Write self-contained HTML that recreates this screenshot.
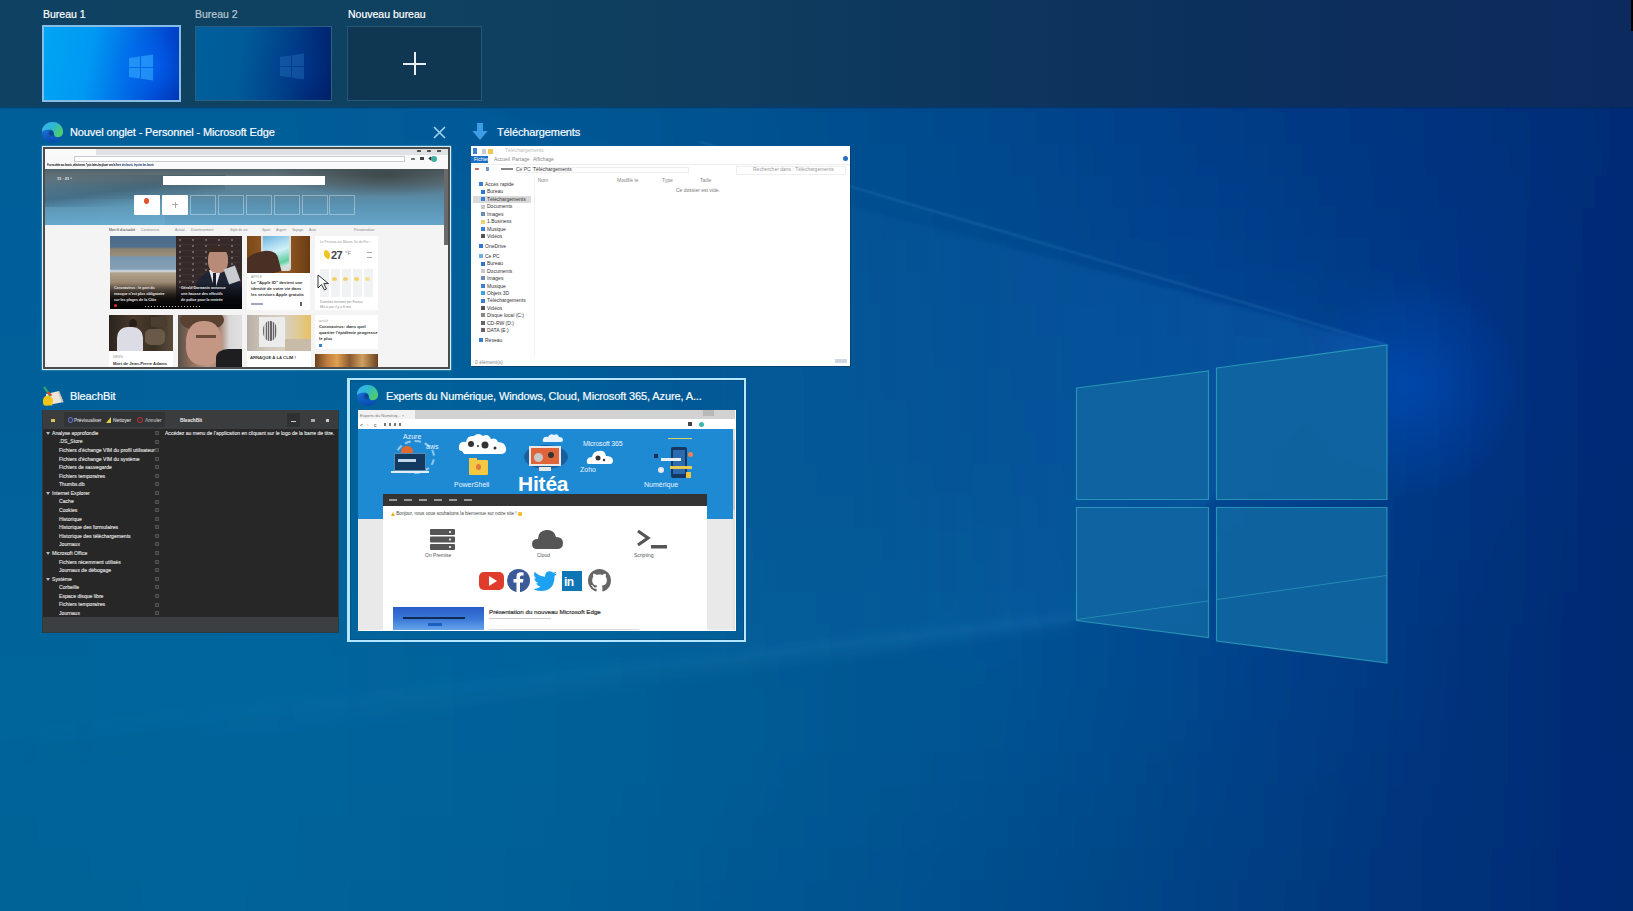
<!DOCTYPE html>
<html><head><meta charset="utf-8">
<style>
*{margin:0;padding:0;box-sizing:border-box}
html,body{width:1633px;height:911px;overflow:hidden;background:#005090;font-family:"Liberation Sans",sans-serif}
.abs{position:absolute}

#wall{position:absolute;left:0;top:0;width:1633px;height:911px}
#band{position:absolute;left:0;top:0;width:1633px;height:106.5px;box-shadow:0 1px 1.5px rgba(0,40,80,.55);background:linear-gradient(90deg,#0f4262 0%,#0f405f 33%,#0e3a5e 50%,#0c305c 74%,#0d2a5e 100%)}
.dlabel{position:absolute;top:8px;font-size:10.5px;-webkit-text-stroke:0.2px currentColor;color:#fff;white-space:nowrap}
.dthumb{position:absolute;top:25px;width:139px;height:77px}
.bbt{position:absolute;font-size:5.1px;line-height:7px;color:#e2e2e2;white-space:nowrap;-webkit-text-stroke:0.15px #ddd}
.ext{position:absolute;font-size:5px;line-height:6.5px;color:#333;white-space:nowrap}
.ttl{position:absolute;font-size:11px;letter-spacing:-0.12px;-webkit-text-stroke:0.2px #eef6fc;color:#fff;white-space:nowrap}
</style></head><body>
<svg id="wall" width="1633" height="911" viewBox="0 0 1633 911">
<!--F--><defs><linearGradient id="r0"><stop offset="0.000" stop-color="#005b97"/><stop offset="0.030" stop-color="#005b97"/><stop offset="0.061" stop-color="#005a97"/><stop offset="0.091" stop-color="#005a97"/><stop offset="0.121" stop-color="#005a96"/><stop offset="0.152" stop-color="#005a96"/><stop offset="0.182" stop-color="#005a96"/><stop offset="0.212" stop-color="#005a96"/><stop offset="0.242" stop-color="#005995"/><stop offset="0.273" stop-color="#005995"/><stop offset="0.303" stop-color="#005894"/><stop offset="0.333" stop-color="#005793"/><stop offset="0.364" stop-color="#005692"/><stop offset="0.394" stop-color="#005491"/><stop offset="0.424" stop-color="#005391"/><stop offset="0.455" stop-color="#005190"/><stop offset="0.485" stop-color="#004f8f"/><stop offset="0.515" stop-color="#004d8e"/><stop offset="0.545" stop-color="#004b8d"/><stop offset="0.576" stop-color="#00498d"/><stop offset="0.606" stop-color="#00478c"/><stop offset="0.636" stop-color="#00448b"/><stop offset="0.667" stop-color="#00428a"/><stop offset="0.697" stop-color="#003f89"/><stop offset="0.727" stop-color="#003d87"/><stop offset="0.758" stop-color="#003a85"/><stop offset="0.788" stop-color="#003883"/><stop offset="0.818" stop-color="#003681"/><stop offset="0.848" stop-color="#00337f"/><stop offset="0.879" stop-color="#00317d"/><stop offset="0.909" stop-color="#002f7a"/><stop offset="0.939" stop-color="#002e77"/><stop offset="0.970" stop-color="#002c74"/><stop offset="1.000" stop-color="#002a71"/></linearGradient><linearGradient id="r1"><stop offset="0.000" stop-color="#005b97"/><stop offset="0.030" stop-color="#005b97"/><stop offset="0.061" stop-color="#005a97"/><stop offset="0.091" stop-color="#005a97"/><stop offset="0.121" stop-color="#005a96"/><stop offset="0.152" stop-color="#005a96"/><stop offset="0.182" stop-color="#005a96"/><stop offset="0.212" stop-color="#005a96"/><stop offset="0.242" stop-color="#005995"/><stop offset="0.273" stop-color="#005995"/><stop offset="0.303" stop-color="#005894"/><stop offset="0.333" stop-color="#005793"/><stop offset="0.364" stop-color="#005692"/><stop offset="0.394" stop-color="#005491"/><stop offset="0.424" stop-color="#005391"/><stop offset="0.455" stop-color="#005190"/><stop offset="0.485" stop-color="#004f8f"/><stop offset="0.515" stop-color="#004d8e"/><stop offset="0.545" stop-color="#004b8d"/><stop offset="0.576" stop-color="#00498d"/><stop offset="0.606" stop-color="#00478c"/><stop offset="0.636" stop-color="#00448b"/><stop offset="0.667" stop-color="#00428a"/><stop offset="0.697" stop-color="#003f89"/><stop offset="0.727" stop-color="#003d87"/><stop offset="0.758" stop-color="#003a85"/><stop offset="0.788" stop-color="#003883"/><stop offset="0.818" stop-color="#003681"/><stop offset="0.848" stop-color="#00337f"/><stop offset="0.879" stop-color="#00317d"/><stop offset="0.909" stop-color="#002f7a"/><stop offset="0.939" stop-color="#002e77"/><stop offset="0.970" stop-color="#002c74"/><stop offset="1.000" stop-color="#002a71"/></linearGradient><linearGradient id="r2"><stop offset="0.000" stop-color="#005b97"/><stop offset="0.030" stop-color="#005b97"/><stop offset="0.061" stop-color="#005a97"/><stop offset="0.091" stop-color="#005a97"/><stop offset="0.121" stop-color="#005a96"/><stop offset="0.152" stop-color="#005a96"/><stop offset="0.182" stop-color="#005a96"/><stop offset="0.212" stop-color="#005a96"/><stop offset="0.242" stop-color="#005995"/><stop offset="0.273" stop-color="#005995"/><stop offset="0.303" stop-color="#005894"/><stop offset="0.333" stop-color="#005793"/><stop offset="0.364" stop-color="#005692"/><stop offset="0.394" stop-color="#005491"/><stop offset="0.424" stop-color="#005391"/><stop offset="0.455" stop-color="#005190"/><stop offset="0.485" stop-color="#004f8f"/><stop offset="0.515" stop-color="#004d8e"/><stop offset="0.545" stop-color="#004b8d"/><stop offset="0.576" stop-color="#00498d"/><stop offset="0.606" stop-color="#00478c"/><stop offset="0.636" stop-color="#00448b"/><stop offset="0.667" stop-color="#00428a"/><stop offset="0.697" stop-color="#003f89"/><stop offset="0.727" stop-color="#003d87"/><stop offset="0.758" stop-color="#003a85"/><stop offset="0.788" stop-color="#003883"/><stop offset="0.818" stop-color="#003681"/><stop offset="0.848" stop-color="#00337f"/><stop offset="0.879" stop-color="#00317d"/><stop offset="0.909" stop-color="#002f7a"/><stop offset="0.939" stop-color="#002e77"/><stop offset="0.970" stop-color="#002c74"/><stop offset="1.000" stop-color="#002a71"/></linearGradient><linearGradient id="r3"><stop offset="0.000" stop-color="#005b97"/><stop offset="0.030" stop-color="#005b97"/><stop offset="0.061" stop-color="#005a97"/><stop offset="0.091" stop-color="#005a97"/><stop offset="0.121" stop-color="#005a96"/><stop offset="0.152" stop-color="#005a96"/><stop offset="0.182" stop-color="#005a96"/><stop offset="0.212" stop-color="#005a96"/><stop offset="0.242" stop-color="#005995"/><stop offset="0.273" stop-color="#005995"/><stop offset="0.303" stop-color="#005894"/><stop offset="0.333" stop-color="#005793"/><stop offset="0.364" stop-color="#005692"/><stop offset="0.394" stop-color="#005491"/><stop offset="0.424" stop-color="#005391"/><stop offset="0.455" stop-color="#005190"/><stop offset="0.485" stop-color="#004f8f"/><stop offset="0.515" stop-color="#004d8e"/><stop offset="0.545" stop-color="#004b8d"/><stop offset="0.576" stop-color="#00498d"/><stop offset="0.606" stop-color="#00478c"/><stop offset="0.636" stop-color="#00448b"/><stop offset="0.667" stop-color="#00428a"/><stop offset="0.697" stop-color="#003f89"/><stop offset="0.727" stop-color="#003d87"/><stop offset="0.758" stop-color="#003a85"/><stop offset="0.788" stop-color="#003883"/><stop offset="0.818" stop-color="#003681"/><stop offset="0.848" stop-color="#00337f"/><stop offset="0.879" stop-color="#00317d"/><stop offset="0.909" stop-color="#002f7a"/><stop offset="0.939" stop-color="#002e77"/><stop offset="0.970" stop-color="#002c74"/><stop offset="1.000" stop-color="#002a71"/></linearGradient><linearGradient id="r4"><stop offset="0.000" stop-color="#005b97"/><stop offset="0.030" stop-color="#005b97"/><stop offset="0.061" stop-color="#005a97"/><stop offset="0.091" stop-color="#005a97"/><stop offset="0.121" stop-color="#005a96"/><stop offset="0.152" stop-color="#005a96"/><stop offset="0.182" stop-color="#005a96"/><stop offset="0.212" stop-color="#005a96"/><stop offset="0.242" stop-color="#005995"/><stop offset="0.273" stop-color="#005995"/><stop offset="0.303" stop-color="#005894"/><stop offset="0.333" stop-color="#005793"/><stop offset="0.364" stop-color="#005692"/><stop offset="0.394" stop-color="#005491"/><stop offset="0.424" stop-color="#005391"/><stop offset="0.455" stop-color="#005190"/><stop offset="0.485" stop-color="#004f8f"/><stop offset="0.515" stop-color="#004d8e"/><stop offset="0.545" stop-color="#004b8d"/><stop offset="0.576" stop-color="#00498d"/><stop offset="0.606" stop-color="#00478c"/><stop offset="0.636" stop-color="#00448b"/><stop offset="0.667" stop-color="#00428a"/><stop offset="0.697" stop-color="#003f89"/><stop offset="0.727" stop-color="#003d87"/><stop offset="0.758" stop-color="#003a85"/><stop offset="0.788" stop-color="#003883"/><stop offset="0.818" stop-color="#003681"/><stop offset="0.848" stop-color="#00337f"/><stop offset="0.879" stop-color="#00317d"/><stop offset="0.909" stop-color="#002f7a"/><stop offset="0.939" stop-color="#002e77"/><stop offset="0.970" stop-color="#002c74"/><stop offset="1.000" stop-color="#002a71"/></linearGradient><linearGradient id="r5"><stop offset="0.000" stop-color="#005b97"/><stop offset="0.030" stop-color="#005b97"/><stop offset="0.061" stop-color="#005a97"/><stop offset="0.091" stop-color="#005a97"/><stop offset="0.121" stop-color="#005a96"/><stop offset="0.152" stop-color="#005a96"/><stop offset="0.182" stop-color="#005a96"/><stop offset="0.212" stop-color="#005a96"/><stop offset="0.242" stop-color="#005995"/><stop offset="0.273" stop-color="#005995"/><stop offset="0.303" stop-color="#005894"/><stop offset="0.333" stop-color="#005793"/><stop offset="0.364" stop-color="#005692"/><stop offset="0.394" stop-color="#005491"/><stop offset="0.424" stop-color="#005391"/><stop offset="0.455" stop-color="#005190"/><stop offset="0.485" stop-color="#004f8f"/><stop offset="0.515" stop-color="#004d8e"/><stop offset="0.545" stop-color="#004b8d"/><stop offset="0.576" stop-color="#00498d"/><stop offset="0.606" stop-color="#00478c"/><stop offset="0.636" stop-color="#00448b"/><stop offset="0.667" stop-color="#00428a"/><stop offset="0.697" stop-color="#003f89"/><stop offset="0.727" stop-color="#003d87"/><stop offset="0.758" stop-color="#003a85"/><stop offset="0.788" stop-color="#003883"/><stop offset="0.818" stop-color="#003681"/><stop offset="0.848" stop-color="#00337f"/><stop offset="0.879" stop-color="#00317d"/><stop offset="0.909" stop-color="#002f7a"/><stop offset="0.939" stop-color="#002e77"/><stop offset="0.970" stop-color="#002c74"/><stop offset="1.000" stop-color="#002a71"/></linearGradient><linearGradient id="r6"><stop offset="0.000" stop-color="#005b97"/><stop offset="0.030" stop-color="#005b97"/><stop offset="0.061" stop-color="#005b97"/><stop offset="0.091" stop-color="#005b97"/><stop offset="0.121" stop-color="#005b97"/><stop offset="0.152" stop-color="#005b96"/><stop offset="0.182" stop-color="#005b96"/><stop offset="0.212" stop-color="#005a96"/><stop offset="0.242" stop-color="#005a95"/><stop offset="0.273" stop-color="#005995"/><stop offset="0.303" stop-color="#005894"/><stop offset="0.333" stop-color="#005793"/><stop offset="0.364" stop-color="#005693"/><stop offset="0.394" stop-color="#005592"/><stop offset="0.424" stop-color="#005391"/><stop offset="0.455" stop-color="#005290"/><stop offset="0.485" stop-color="#00508f"/><stop offset="0.515" stop-color="#004e8f"/><stop offset="0.545" stop-color="#004c8e"/><stop offset="0.576" stop-color="#004a8d"/><stop offset="0.606" stop-color="#00478d"/><stop offset="0.636" stop-color="#00458c"/><stop offset="0.667" stop-color="#00428b"/><stop offset="0.697" stop-color="#00408a"/><stop offset="0.727" stop-color="#003d88"/><stop offset="0.758" stop-color="#003b86"/><stop offset="0.788" stop-color="#003884"/><stop offset="0.818" stop-color="#003682"/><stop offset="0.848" stop-color="#003480"/><stop offset="0.879" stop-color="#00327e"/><stop offset="0.909" stop-color="#00307b"/><stop offset="0.939" stop-color="#002e78"/><stop offset="0.970" stop-color="#002c75"/><stop offset="1.000" stop-color="#002a72"/></linearGradient><linearGradient id="r7"><stop offset="0.000" stop-color="#005b97"/><stop offset="0.030" stop-color="#005b97"/><stop offset="0.061" stop-color="#005b97"/><stop offset="0.091" stop-color="#005b97"/><stop offset="0.121" stop-color="#005b97"/><stop offset="0.152" stop-color="#005b97"/><stop offset="0.182" stop-color="#005b97"/><stop offset="0.212" stop-color="#005b96"/><stop offset="0.242" stop-color="#005b96"/><stop offset="0.273" stop-color="#005a95"/><stop offset="0.303" stop-color="#005995"/><stop offset="0.333" stop-color="#005894"/><stop offset="0.364" stop-color="#005793"/><stop offset="0.394" stop-color="#005592"/><stop offset="0.424" stop-color="#005491"/><stop offset="0.455" stop-color="#005291"/><stop offset="0.485" stop-color="#005190"/><stop offset="0.515" stop-color="#004f8f"/><stop offset="0.545" stop-color="#004d8f"/><stop offset="0.576" stop-color="#004b8e"/><stop offset="0.606" stop-color="#00488e"/><stop offset="0.636" stop-color="#00468d"/><stop offset="0.667" stop-color="#00438c"/><stop offset="0.697" stop-color="#00418b"/><stop offset="0.727" stop-color="#003e89"/><stop offset="0.758" stop-color="#003c87"/><stop offset="0.788" stop-color="#003985"/><stop offset="0.818" stop-color="#003783"/><stop offset="0.848" stop-color="#003481"/><stop offset="0.879" stop-color="#00327f"/><stop offset="0.909" stop-color="#00307c"/><stop offset="0.939" stop-color="#002e79"/><stop offset="0.970" stop-color="#002c75"/><stop offset="1.000" stop-color="#002a72"/></linearGradient><linearGradient id="r8"><stop offset="0.000" stop-color="#005c97"/><stop offset="0.030" stop-color="#005c97"/><stop offset="0.061" stop-color="#005c97"/><stop offset="0.091" stop-color="#005c97"/><stop offset="0.121" stop-color="#005c97"/><stop offset="0.152" stop-color="#005c97"/><stop offset="0.182" stop-color="#005c97"/><stop offset="0.212" stop-color="#005c97"/><stop offset="0.242" stop-color="#005b96"/><stop offset="0.273" stop-color="#005b96"/><stop offset="0.303" stop-color="#005a95"/><stop offset="0.333" stop-color="#005994"/><stop offset="0.364" stop-color="#005793"/><stop offset="0.394" stop-color="#005692"/><stop offset="0.424" stop-color="#005592"/><stop offset="0.455" stop-color="#005391"/><stop offset="0.485" stop-color="#005190"/><stop offset="0.515" stop-color="#004f90"/><stop offset="0.545" stop-color="#004d8f"/><stop offset="0.576" stop-color="#004b8f"/><stop offset="0.606" stop-color="#00498e"/><stop offset="0.636" stop-color="#00478e"/><stop offset="0.667" stop-color="#00448d"/><stop offset="0.697" stop-color="#00418c"/><stop offset="0.727" stop-color="#003f8b"/><stop offset="0.758" stop-color="#003d89"/><stop offset="0.788" stop-color="#003a86"/><stop offset="0.818" stop-color="#003784"/><stop offset="0.848" stop-color="#003582"/><stop offset="0.879" stop-color="#003280"/><stop offset="0.909" stop-color="#00307d"/><stop offset="0.939" stop-color="#002e79"/><stop offset="0.970" stop-color="#002b76"/><stop offset="1.000" stop-color="#002972"/></linearGradient><linearGradient id="r9"><stop offset="0.000" stop-color="#005c98"/><stop offset="0.030" stop-color="#005c98"/><stop offset="0.061" stop-color="#005c97"/><stop offset="0.091" stop-color="#005c97"/><stop offset="0.121" stop-color="#005c97"/><stop offset="0.152" stop-color="#005c97"/><stop offset="0.182" stop-color="#005c97"/><stop offset="0.212" stop-color="#005c97"/><stop offset="0.242" stop-color="#005c97"/><stop offset="0.273" stop-color="#005b96"/><stop offset="0.303" stop-color="#005b95"/><stop offset="0.333" stop-color="#005995"/><stop offset="0.364" stop-color="#005894"/><stop offset="0.394" stop-color="#005793"/><stop offset="0.424" stop-color="#005592"/><stop offset="0.455" stop-color="#005491"/><stop offset="0.485" stop-color="#005291"/><stop offset="0.515" stop-color="#005090"/><stop offset="0.545" stop-color="#004e90"/><stop offset="0.576" stop-color="#004c90"/><stop offset="0.606" stop-color="#004a8f"/><stop offset="0.636" stop-color="#00478f"/><stop offset="0.667" stop-color="#00458e"/><stop offset="0.697" stop-color="#00428d"/><stop offset="0.727" stop-color="#00408c"/><stop offset="0.758" stop-color="#003e8a"/><stop offset="0.788" stop-color="#003b88"/><stop offset="0.818" stop-color="#003886"/><stop offset="0.848" stop-color="#003684"/><stop offset="0.879" stop-color="#003381"/><stop offset="0.909" stop-color="#00307e"/><stop offset="0.939" stop-color="#002d7a"/><stop offset="0.970" stop-color="#002b76"/><stop offset="1.000" stop-color="#002972"/></linearGradient><linearGradient id="r10"><stop offset="0.000" stop-color="#005c98"/><stop offset="0.030" stop-color="#005c98"/><stop offset="0.061" stop-color="#005d98"/><stop offset="0.091" stop-color="#005d98"/><stop offset="0.121" stop-color="#005d98"/><stop offset="0.152" stop-color="#005d98"/><stop offset="0.182" stop-color="#005d97"/><stop offset="0.212" stop-color="#005d97"/><stop offset="0.242" stop-color="#005d97"/><stop offset="0.273" stop-color="#005c96"/><stop offset="0.303" stop-color="#005b96"/><stop offset="0.333" stop-color="#005a95"/><stop offset="0.364" stop-color="#005994"/><stop offset="0.394" stop-color="#005793"/><stop offset="0.424" stop-color="#005692"/><stop offset="0.455" stop-color="#005491"/><stop offset="0.485" stop-color="#005291"/><stop offset="0.515" stop-color="#005191"/><stop offset="0.545" stop-color="#004f90"/><stop offset="0.576" stop-color="#004d90"/><stop offset="0.606" stop-color="#004b90"/><stop offset="0.636" stop-color="#004890"/><stop offset="0.667" stop-color="#00468f"/><stop offset="0.697" stop-color="#00448e"/><stop offset="0.727" stop-color="#00428d"/><stop offset="0.758" stop-color="#003f8b"/><stop offset="0.788" stop-color="#003d89"/><stop offset="0.818" stop-color="#003a87"/><stop offset="0.848" stop-color="#003785"/><stop offset="0.879" stop-color="#003383"/><stop offset="0.909" stop-color="#00307f"/><stop offset="0.939" stop-color="#002d7b"/><stop offset="0.970" stop-color="#002b76"/><stop offset="1.000" stop-color="#002972"/></linearGradient><linearGradient id="r11"><stop offset="0.000" stop-color="#005d98"/><stop offset="0.030" stop-color="#005d98"/><stop offset="0.061" stop-color="#005d98"/><stop offset="0.091" stop-color="#005d98"/><stop offset="0.121" stop-color="#005d98"/><stop offset="0.152" stop-color="#005d98"/><stop offset="0.182" stop-color="#005e98"/><stop offset="0.212" stop-color="#005d98"/><stop offset="0.242" stop-color="#005d97"/><stop offset="0.273" stop-color="#005d97"/><stop offset="0.303" stop-color="#005c96"/><stop offset="0.333" stop-color="#005b95"/><stop offset="0.364" stop-color="#005994"/><stop offset="0.394" stop-color="#005893"/><stop offset="0.424" stop-color="#005692"/><stop offset="0.455" stop-color="#005492"/><stop offset="0.485" stop-color="#005391"/><stop offset="0.515" stop-color="#005191"/><stop offset="0.545" stop-color="#005091"/><stop offset="0.576" stop-color="#004d91"/><stop offset="0.606" stop-color="#004b90"/><stop offset="0.636" stop-color="#004990"/><stop offset="0.667" stop-color="#004790"/><stop offset="0.697" stop-color="#00458f"/><stop offset="0.727" stop-color="#00438e"/><stop offset="0.758" stop-color="#00418d"/><stop offset="0.788" stop-color="#003f8b"/><stop offset="0.818" stop-color="#003c89"/><stop offset="0.848" stop-color="#003887"/><stop offset="0.879" stop-color="#003384"/><stop offset="0.909" stop-color="#003080"/><stop offset="0.939" stop-color="#002d7b"/><stop offset="0.970" stop-color="#002a76"/><stop offset="1.000" stop-color="#002872"/></linearGradient><linearGradient id="r12"><stop offset="0.000" stop-color="#005d98"/><stop offset="0.030" stop-color="#005d98"/><stop offset="0.061" stop-color="#005e98"/><stop offset="0.091" stop-color="#005e98"/><stop offset="0.121" stop-color="#005e98"/><stop offset="0.152" stop-color="#005e98"/><stop offset="0.182" stop-color="#005e98"/><stop offset="0.212" stop-color="#005e98"/><stop offset="0.242" stop-color="#005e97"/><stop offset="0.273" stop-color="#005d97"/><stop offset="0.303" stop-color="#005c96"/><stop offset="0.333" stop-color="#005b95"/><stop offset="0.364" stop-color="#005a94"/><stop offset="0.394" stop-color="#005893"/><stop offset="0.424" stop-color="#005692"/><stop offset="0.455" stop-color="#005592"/><stop offset="0.485" stop-color="#005391"/><stop offset="0.515" stop-color="#005291"/><stop offset="0.545" stop-color="#005091"/><stop offset="0.576" stop-color="#004e91"/><stop offset="0.606" stop-color="#004c91"/><stop offset="0.636" stop-color="#004a91"/><stop offset="0.667" stop-color="#004891"/><stop offset="0.697" stop-color="#004690"/><stop offset="0.727" stop-color="#00448f"/><stop offset="0.758" stop-color="#00438e"/><stop offset="0.788" stop-color="#00418d"/><stop offset="0.818" stop-color="#003d8b"/><stop offset="0.848" stop-color="#003988"/><stop offset="0.879" stop-color="#003485"/><stop offset="0.909" stop-color="#003080"/><stop offset="0.939" stop-color="#002d7b"/><stop offset="0.970" stop-color="#002a76"/><stop offset="1.000" stop-color="#002872"/></linearGradient><linearGradient id="r13"><stop offset="0.000" stop-color="#005e98"/><stop offset="0.030" stop-color="#005e98"/><stop offset="0.061" stop-color="#005e98"/><stop offset="0.091" stop-color="#005e98"/><stop offset="0.121" stop-color="#005e98"/><stop offset="0.152" stop-color="#005f98"/><stop offset="0.182" stop-color="#005f98"/><stop offset="0.212" stop-color="#005e98"/><stop offset="0.242" stop-color="#005e98"/><stop offset="0.273" stop-color="#005e97"/><stop offset="0.303" stop-color="#005d96"/><stop offset="0.333" stop-color="#005b95"/><stop offset="0.364" stop-color="#005a94"/><stop offset="0.394" stop-color="#005893"/><stop offset="0.424" stop-color="#005792"/><stop offset="0.455" stop-color="#005592"/><stop offset="0.485" stop-color="#005391"/><stop offset="0.515" stop-color="#005291"/><stop offset="0.545" stop-color="#005091"/><stop offset="0.576" stop-color="#004e91"/><stop offset="0.606" stop-color="#004c91"/><stop offset="0.636" stop-color="#004b91"/><stop offset="0.667" stop-color="#004991"/><stop offset="0.697" stop-color="#004791"/><stop offset="0.727" stop-color="#004590"/><stop offset="0.758" stop-color="#00448f"/><stop offset="0.788" stop-color="#00428e"/><stop offset="0.818" stop-color="#003e8c"/><stop offset="0.848" stop-color="#003989"/><stop offset="0.879" stop-color="#003485"/><stop offset="0.909" stop-color="#003080"/><stop offset="0.939" stop-color="#002d7b"/><stop offset="0.970" stop-color="#002a76"/><stop offset="1.000" stop-color="#002871"/></linearGradient><linearGradient id="r14"><stop offset="0.000" stop-color="#005e98"/><stop offset="0.030" stop-color="#005e98"/><stop offset="0.061" stop-color="#005f98"/><stop offset="0.091" stop-color="#005f98"/><stop offset="0.121" stop-color="#005f99"/><stop offset="0.152" stop-color="#005f99"/><stop offset="0.182" stop-color="#005f99"/><stop offset="0.212" stop-color="#005f98"/><stop offset="0.242" stop-color="#005f98"/><stop offset="0.273" stop-color="#005e97"/><stop offset="0.303" stop-color="#005d97"/><stop offset="0.333" stop-color="#005c96"/><stop offset="0.364" stop-color="#005a95"/><stop offset="0.394" stop-color="#005994"/><stop offset="0.424" stop-color="#005792"/><stop offset="0.455" stop-color="#005592"/><stop offset="0.485" stop-color="#005491"/><stop offset="0.515" stop-color="#005291"/><stop offset="0.545" stop-color="#005091"/><stop offset="0.576" stop-color="#004f91"/><stop offset="0.606" stop-color="#004d91"/><stop offset="0.636" stop-color="#004b91"/><stop offset="0.667" stop-color="#004991"/><stop offset="0.697" stop-color="#004891"/><stop offset="0.727" stop-color="#004691"/><stop offset="0.758" stop-color="#00448f"/><stop offset="0.788" stop-color="#00428e"/><stop offset="0.818" stop-color="#003e8c"/><stop offset="0.848" stop-color="#003989"/><stop offset="0.879" stop-color="#003485"/><stop offset="0.909" stop-color="#003080"/><stop offset="0.939" stop-color="#002d7a"/><stop offset="0.970" stop-color="#002a75"/><stop offset="1.000" stop-color="#002771"/></linearGradient><linearGradient id="r15"><stop offset="0.000" stop-color="#005f98"/><stop offset="0.030" stop-color="#005f98"/><stop offset="0.061" stop-color="#005f98"/><stop offset="0.091" stop-color="#005f99"/><stop offset="0.121" stop-color="#006099"/><stop offset="0.152" stop-color="#006099"/><stop offset="0.182" stop-color="#006099"/><stop offset="0.212" stop-color="#006099"/><stop offset="0.242" stop-color="#005f98"/><stop offset="0.273" stop-color="#005e98"/><stop offset="0.303" stop-color="#005e97"/><stop offset="0.333" stop-color="#005c96"/><stop offset="0.364" stop-color="#005b95"/><stop offset="0.394" stop-color="#005994"/><stop offset="0.424" stop-color="#005793"/><stop offset="0.455" stop-color="#005692"/><stop offset="0.485" stop-color="#005491"/><stop offset="0.515" stop-color="#005291"/><stop offset="0.545" stop-color="#005190"/><stop offset="0.576" stop-color="#004f91"/><stop offset="0.606" stop-color="#004d91"/><stop offset="0.636" stop-color="#004c92"/><stop offset="0.667" stop-color="#004a92"/><stop offset="0.697" stop-color="#004891"/><stop offset="0.727" stop-color="#004791"/><stop offset="0.758" stop-color="#004490"/><stop offset="0.788" stop-color="#00428e"/><stop offset="0.818" stop-color="#003e8c"/><stop offset="0.848" stop-color="#003989"/><stop offset="0.879" stop-color="#003485"/><stop offset="0.909" stop-color="#00307f"/><stop offset="0.939" stop-color="#002d7a"/><stop offset="0.970" stop-color="#002a74"/><stop offset="1.000" stop-color="#002770"/></linearGradient><linearGradient id="r16"><stop offset="0.000" stop-color="#006098"/><stop offset="0.030" stop-color="#006098"/><stop offset="0.061" stop-color="#006098"/><stop offset="0.091" stop-color="#006099"/><stop offset="0.121" stop-color="#006099"/><stop offset="0.152" stop-color="#006099"/><stop offset="0.182" stop-color="#006099"/><stop offset="0.212" stop-color="#006099"/><stop offset="0.242" stop-color="#006099"/><stop offset="0.273" stop-color="#005f98"/><stop offset="0.303" stop-color="#005e97"/><stop offset="0.333" stop-color="#005d96"/><stop offset="0.364" stop-color="#005b95"/><stop offset="0.394" stop-color="#005a94"/><stop offset="0.424" stop-color="#005893"/><stop offset="0.455" stop-color="#005692"/><stop offset="0.485" stop-color="#005491"/><stop offset="0.515" stop-color="#005291"/><stop offset="0.545" stop-color="#005191"/><stop offset="0.576" stop-color="#004f91"/><stop offset="0.606" stop-color="#004e91"/><stop offset="0.636" stop-color="#004c92"/><stop offset="0.667" stop-color="#004b92"/><stop offset="0.697" stop-color="#004991"/><stop offset="0.727" stop-color="#004791"/><stop offset="0.758" stop-color="#00448f"/><stop offset="0.788" stop-color="#00418d"/><stop offset="0.818" stop-color="#003d8b"/><stop offset="0.848" stop-color="#003988"/><stop offset="0.879" stop-color="#003483"/><stop offset="0.909" stop-color="#00307e"/><stop offset="0.939" stop-color="#002d79"/><stop offset="0.970" stop-color="#002a74"/><stop offset="1.000" stop-color="#002770"/></linearGradient><linearGradient id="r17"><stop offset="0.000" stop-color="#006098"/><stop offset="0.030" stop-color="#006098"/><stop offset="0.061" stop-color="#006099"/><stop offset="0.091" stop-color="#006099"/><stop offset="0.121" stop-color="#006199"/><stop offset="0.152" stop-color="#006199"/><stop offset="0.182" stop-color="#006199"/><stop offset="0.212" stop-color="#006099"/><stop offset="0.242" stop-color="#006099"/><stop offset="0.273" stop-color="#005f98"/><stop offset="0.303" stop-color="#005e97"/><stop offset="0.333" stop-color="#005d96"/><stop offset="0.364" stop-color="#005c95"/><stop offset="0.394" stop-color="#005a94"/><stop offset="0.424" stop-color="#005893"/><stop offset="0.455" stop-color="#005692"/><stop offset="0.485" stop-color="#005491"/><stop offset="0.515" stop-color="#005391"/><stop offset="0.545" stop-color="#005291"/><stop offset="0.576" stop-color="#005091"/><stop offset="0.606" stop-color="#004f92"/><stop offset="0.636" stop-color="#004d92"/><stop offset="0.667" stop-color="#004b92"/><stop offset="0.697" stop-color="#004991"/><stop offset="0.727" stop-color="#004790"/><stop offset="0.758" stop-color="#00448f"/><stop offset="0.788" stop-color="#00418d"/><stop offset="0.818" stop-color="#003d8a"/><stop offset="0.848" stop-color="#003986"/><stop offset="0.879" stop-color="#003482"/><stop offset="0.909" stop-color="#00307d"/><stop offset="0.939" stop-color="#002d78"/><stop offset="0.970" stop-color="#002a73"/><stop offset="1.000" stop-color="#00276f"/></linearGradient><linearGradient id="r18"><stop offset="0.000" stop-color="#006198"/><stop offset="0.030" stop-color="#006199"/><stop offset="0.061" stop-color="#006199"/><stop offset="0.091" stop-color="#006199"/><stop offset="0.121" stop-color="#006199"/><stop offset="0.152" stop-color="#00619a"/><stop offset="0.182" stop-color="#00619a"/><stop offset="0.212" stop-color="#006199"/><stop offset="0.242" stop-color="#006199"/><stop offset="0.273" stop-color="#006098"/><stop offset="0.303" stop-color="#005f98"/><stop offset="0.333" stop-color="#005e97"/><stop offset="0.364" stop-color="#005c95"/><stop offset="0.394" stop-color="#005b94"/><stop offset="0.424" stop-color="#005993"/><stop offset="0.455" stop-color="#005792"/><stop offset="0.485" stop-color="#005591"/><stop offset="0.515" stop-color="#005491"/><stop offset="0.545" stop-color="#005291"/><stop offset="0.576" stop-color="#005192"/><stop offset="0.606" stop-color="#005092"/><stop offset="0.636" stop-color="#004e92"/><stop offset="0.667" stop-color="#004c92"/><stop offset="0.697" stop-color="#004991"/><stop offset="0.727" stop-color="#004790"/><stop offset="0.758" stop-color="#00448e"/><stop offset="0.788" stop-color="#00408c"/><stop offset="0.818" stop-color="#003c89"/><stop offset="0.848" stop-color="#003885"/><stop offset="0.879" stop-color="#003480"/><stop offset="0.909" stop-color="#00307c"/><stop offset="0.939" stop-color="#002d77"/><stop offset="0.970" stop-color="#002a73"/><stop offset="1.000" stop-color="#00276f"/></linearGradient><linearGradient id="r19"><stop offset="0.000" stop-color="#006198"/><stop offset="0.030" stop-color="#006199"/><stop offset="0.061" stop-color="#006199"/><stop offset="0.091" stop-color="#006199"/><stop offset="0.121" stop-color="#00629a"/><stop offset="0.152" stop-color="#00629a"/><stop offset="0.182" stop-color="#00629a"/><stop offset="0.212" stop-color="#00619a"/><stop offset="0.242" stop-color="#006199"/><stop offset="0.273" stop-color="#006099"/><stop offset="0.303" stop-color="#005f98"/><stop offset="0.333" stop-color="#005e97"/><stop offset="0.364" stop-color="#005d96"/><stop offset="0.394" stop-color="#005b95"/><stop offset="0.424" stop-color="#005a93"/><stop offset="0.455" stop-color="#005893"/><stop offset="0.485" stop-color="#005692"/><stop offset="0.515" stop-color="#005592"/><stop offset="0.545" stop-color="#005392"/><stop offset="0.576" stop-color="#005292"/><stop offset="0.606" stop-color="#005193"/><stop offset="0.636" stop-color="#004f93"/><stop offset="0.667" stop-color="#004c92"/><stop offset="0.697" stop-color="#004a91"/><stop offset="0.727" stop-color="#00478f"/><stop offset="0.758" stop-color="#00438d"/><stop offset="0.788" stop-color="#00408b"/><stop offset="0.818" stop-color="#003c87"/><stop offset="0.848" stop-color="#003883"/><stop offset="0.879" stop-color="#00347f"/><stop offset="0.909" stop-color="#00307a"/><stop offset="0.939" stop-color="#002d76"/><stop offset="0.970" stop-color="#002a72"/><stop offset="1.000" stop-color="#00276f"/></linearGradient><linearGradient id="r20"><stop offset="0.000" stop-color="#006299"/><stop offset="0.030" stop-color="#006299"/><stop offset="0.061" stop-color="#006299"/><stop offset="0.091" stop-color="#00629a"/><stop offset="0.121" stop-color="#00629a"/><stop offset="0.152" stop-color="#00629a"/><stop offset="0.182" stop-color="#00629a"/><stop offset="0.212" stop-color="#00629a"/><stop offset="0.242" stop-color="#00619a"/><stop offset="0.273" stop-color="#006199"/><stop offset="0.303" stop-color="#006098"/><stop offset="0.333" stop-color="#005f97"/><stop offset="0.364" stop-color="#005d96"/><stop offset="0.394" stop-color="#005c95"/><stop offset="0.424" stop-color="#005a94"/><stop offset="0.455" stop-color="#005993"/><stop offset="0.485" stop-color="#005792"/><stop offset="0.515" stop-color="#005692"/><stop offset="0.545" stop-color="#005493"/><stop offset="0.576" stop-color="#005393"/><stop offset="0.606" stop-color="#005193"/><stop offset="0.636" stop-color="#004f93"/><stop offset="0.667" stop-color="#004d92"/><stop offset="0.697" stop-color="#004a91"/><stop offset="0.727" stop-color="#00468f"/><stop offset="0.758" stop-color="#00438c"/><stop offset="0.788" stop-color="#003f8a"/><stop offset="0.818" stop-color="#003b86"/><stop offset="0.848" stop-color="#003782"/><stop offset="0.879" stop-color="#00337e"/><stop offset="0.909" stop-color="#003079"/><stop offset="0.939" stop-color="#002d76"/><stop offset="0.970" stop-color="#002a72"/><stop offset="1.000" stop-color="#00276f"/></linearGradient><linearGradient id="r21"><stop offset="0.000" stop-color="#006299"/><stop offset="0.030" stop-color="#006299"/><stop offset="0.061" stop-color="#006299"/><stop offset="0.091" stop-color="#00629a"/><stop offset="0.121" stop-color="#00629a"/><stop offset="0.152" stop-color="#00629a"/><stop offset="0.182" stop-color="#00629a"/><stop offset="0.212" stop-color="#00629a"/><stop offset="0.242" stop-color="#00629a"/><stop offset="0.273" stop-color="#006199"/><stop offset="0.303" stop-color="#006098"/><stop offset="0.333" stop-color="#005f97"/><stop offset="0.364" stop-color="#005e96"/><stop offset="0.394" stop-color="#005c95"/><stop offset="0.424" stop-color="#005b94"/><stop offset="0.455" stop-color="#005993"/><stop offset="0.485" stop-color="#005893"/><stop offset="0.515" stop-color="#005793"/><stop offset="0.545" stop-color="#005593"/><stop offset="0.576" stop-color="#005493"/><stop offset="0.606" stop-color="#005294"/><stop offset="0.636" stop-color="#005093"/><stop offset="0.667" stop-color="#004d92"/><stop offset="0.697" stop-color="#004a90"/><stop offset="0.727" stop-color="#00468e"/><stop offset="0.758" stop-color="#00428c"/><stop offset="0.788" stop-color="#003f89"/><stop offset="0.818" stop-color="#003b85"/><stop offset="0.848" stop-color="#003781"/><stop offset="0.879" stop-color="#00337d"/><stop offset="0.909" stop-color="#003079"/><stop offset="0.939" stop-color="#002c75"/><stop offset="0.970" stop-color="#002a72"/><stop offset="1.000" stop-color="#00276f"/></linearGradient><linearGradient id="r22"><stop offset="0.000" stop-color="#006299"/><stop offset="0.030" stop-color="#006299"/><stop offset="0.061" stop-color="#006299"/><stop offset="0.091" stop-color="#00639a"/><stop offset="0.121" stop-color="#00639a"/><stop offset="0.152" stop-color="#00639a"/><stop offset="0.182" stop-color="#00639b"/><stop offset="0.212" stop-color="#00629a"/><stop offset="0.242" stop-color="#00629a"/><stop offset="0.273" stop-color="#006199"/><stop offset="0.303" stop-color="#006199"/><stop offset="0.333" stop-color="#006098"/><stop offset="0.364" stop-color="#005e97"/><stop offset="0.394" stop-color="#005d95"/><stop offset="0.424" stop-color="#005c95"/><stop offset="0.455" stop-color="#005a94"/><stop offset="0.485" stop-color="#005993"/><stop offset="0.515" stop-color="#005793"/><stop offset="0.545" stop-color="#005693"/><stop offset="0.576" stop-color="#005494"/><stop offset="0.606" stop-color="#005394"/><stop offset="0.636" stop-color="#005093"/><stop offset="0.667" stop-color="#004d91"/><stop offset="0.697" stop-color="#00498f"/><stop offset="0.727" stop-color="#00468d"/><stop offset="0.758" stop-color="#00428b"/><stop offset="0.788" stop-color="#003e88"/><stop offset="0.818" stop-color="#003a84"/><stop offset="0.848" stop-color="#003680"/><stop offset="0.879" stop-color="#00337c"/><stop offset="0.909" stop-color="#002f78"/><stop offset="0.939" stop-color="#002c75"/><stop offset="0.970" stop-color="#002a72"/><stop offset="1.000" stop-color="#00276f"/></linearGradient><linearGradient id="r23"><stop offset="0.000" stop-color="#006399"/><stop offset="0.030" stop-color="#006399"/><stop offset="0.061" stop-color="#006399"/><stop offset="0.091" stop-color="#00639a"/><stop offset="0.121" stop-color="#00639a"/><stop offset="0.152" stop-color="#00639b"/><stop offset="0.182" stop-color="#00639b"/><stop offset="0.212" stop-color="#00639b"/><stop offset="0.242" stop-color="#00629a"/><stop offset="0.273" stop-color="#006299"/><stop offset="0.303" stop-color="#006199"/><stop offset="0.333" stop-color="#006098"/><stop offset="0.364" stop-color="#005f97"/><stop offset="0.394" stop-color="#005d96"/><stop offset="0.424" stop-color="#005c95"/><stop offset="0.455" stop-color="#005b94"/><stop offset="0.485" stop-color="#005994"/><stop offset="0.515" stop-color="#005893"/><stop offset="0.545" stop-color="#005693"/><stop offset="0.576" stop-color="#005593"/><stop offset="0.606" stop-color="#005393"/><stop offset="0.636" stop-color="#005092"/><stop offset="0.667" stop-color="#004d90"/><stop offset="0.697" stop-color="#00498e"/><stop offset="0.727" stop-color="#00458c"/><stop offset="0.758" stop-color="#00418a"/><stop offset="0.788" stop-color="#003d87"/><stop offset="0.818" stop-color="#003a83"/><stop offset="0.848" stop-color="#003680"/><stop offset="0.879" stop-color="#00327c"/><stop offset="0.909" stop-color="#002f78"/><stop offset="0.939" stop-color="#002c75"/><stop offset="0.970" stop-color="#002972"/><stop offset="1.000" stop-color="#00276f"/></linearGradient><linearGradient id="r24"><stop offset="0.000" stop-color="#006399"/><stop offset="0.030" stop-color="#006399"/><stop offset="0.061" stop-color="#006399"/><stop offset="0.091" stop-color="#00639a"/><stop offset="0.121" stop-color="#00639a"/><stop offset="0.152" stop-color="#00639b"/><stop offset="0.182" stop-color="#00639b"/><stop offset="0.212" stop-color="#00639b"/><stop offset="0.242" stop-color="#00629a"/><stop offset="0.273" stop-color="#006299"/><stop offset="0.303" stop-color="#006199"/><stop offset="0.333" stop-color="#006098"/><stop offset="0.364" stop-color="#005f97"/><stop offset="0.394" stop-color="#005e96"/><stop offset="0.424" stop-color="#005c95"/><stop offset="0.455" stop-color="#005b94"/><stop offset="0.485" stop-color="#005a94"/><stop offset="0.515" stop-color="#005893"/><stop offset="0.545" stop-color="#005693"/><stop offset="0.576" stop-color="#005493"/><stop offset="0.606" stop-color="#005292"/><stop offset="0.636" stop-color="#005091"/><stop offset="0.667" stop-color="#004c8f"/><stop offset="0.697" stop-color="#00498d"/><stop offset="0.727" stop-color="#00458b"/><stop offset="0.758" stop-color="#004189"/><stop offset="0.788" stop-color="#003d86"/><stop offset="0.818" stop-color="#003983"/><stop offset="0.848" stop-color="#00367f"/><stop offset="0.879" stop-color="#00327c"/><stop offset="0.909" stop-color="#002f78"/><stop offset="0.939" stop-color="#002c75"/><stop offset="0.970" stop-color="#002972"/><stop offset="1.000" stop-color="#00276f"/></linearGradient><linearGradient id="r25"><stop offset="0.000" stop-color="#006399"/><stop offset="0.030" stop-color="#006399"/><stop offset="0.061" stop-color="#006399"/><stop offset="0.091" stop-color="#00639a"/><stop offset="0.121" stop-color="#00639a"/><stop offset="0.152" stop-color="#00639a"/><stop offset="0.182" stop-color="#00639a"/><stop offset="0.212" stop-color="#00639a"/><stop offset="0.242" stop-color="#00629a"/><stop offset="0.273" stop-color="#006299"/><stop offset="0.303" stop-color="#006199"/><stop offset="0.333" stop-color="#006098"/><stop offset="0.364" stop-color="#005f97"/><stop offset="0.394" stop-color="#005e96"/><stop offset="0.424" stop-color="#005c95"/><stop offset="0.455" stop-color="#005b94"/><stop offset="0.485" stop-color="#005a94"/><stop offset="0.515" stop-color="#005893"/><stop offset="0.545" stop-color="#005693"/><stop offset="0.576" stop-color="#005492"/><stop offset="0.606" stop-color="#005291"/><stop offset="0.636" stop-color="#004f90"/><stop offset="0.667" stop-color="#004c8e"/><stop offset="0.697" stop-color="#00488c"/><stop offset="0.727" stop-color="#00448a"/><stop offset="0.758" stop-color="#004087"/><stop offset="0.788" stop-color="#003c85"/><stop offset="0.818" stop-color="#003982"/><stop offset="0.848" stop-color="#00357f"/><stop offset="0.879" stop-color="#00327b"/><stop offset="0.909" stop-color="#002f78"/><stop offset="0.939" stop-color="#002c75"/><stop offset="0.970" stop-color="#002972"/><stop offset="1.000" stop-color="#00276f"/></linearGradient><linearGradient id="r26"><stop offset="0.000" stop-color="#006399"/><stop offset="0.030" stop-color="#006399"/><stop offset="0.061" stop-color="#006399"/><stop offset="0.091" stop-color="#006399"/><stop offset="0.121" stop-color="#00639a"/><stop offset="0.152" stop-color="#00639a"/><stop offset="0.182" stop-color="#00639a"/><stop offset="0.212" stop-color="#00639a"/><stop offset="0.242" stop-color="#00629a"/><stop offset="0.273" stop-color="#006299"/><stop offset="0.303" stop-color="#006198"/><stop offset="0.333" stop-color="#006098"/><stop offset="0.364" stop-color="#005f97"/><stop offset="0.394" stop-color="#005e96"/><stop offset="0.424" stop-color="#005c95"/><stop offset="0.455" stop-color="#005b94"/><stop offset="0.485" stop-color="#005993"/><stop offset="0.515" stop-color="#005793"/><stop offset="0.545" stop-color="#005592"/><stop offset="0.576" stop-color="#005391"/><stop offset="0.606" stop-color="#005190"/><stop offset="0.636" stop-color="#004e8f"/><stop offset="0.667" stop-color="#004b8d"/><stop offset="0.697" stop-color="#00478a"/><stop offset="0.727" stop-color="#004388"/><stop offset="0.758" stop-color="#004086"/><stop offset="0.788" stop-color="#003c84"/><stop offset="0.818" stop-color="#003881"/><stop offset="0.848" stop-color="#00357e"/><stop offset="0.879" stop-color="#00327b"/><stop offset="0.909" stop-color="#002f78"/><stop offset="0.939" stop-color="#002c75"/><stop offset="0.970" stop-color="#002973"/><stop offset="1.000" stop-color="#002770"/></linearGradient><linearGradient id="r27"><stop offset="0.000" stop-color="#006398"/><stop offset="0.030" stop-color="#006399"/><stop offset="0.061" stop-color="#006399"/><stop offset="0.091" stop-color="#006399"/><stop offset="0.121" stop-color="#00639a"/><stop offset="0.152" stop-color="#00639a"/><stop offset="0.182" stop-color="#00639a"/><stop offset="0.212" stop-color="#00639a"/><stop offset="0.242" stop-color="#006299"/><stop offset="0.273" stop-color="#006299"/><stop offset="0.303" stop-color="#006198"/><stop offset="0.333" stop-color="#006097"/><stop offset="0.364" stop-color="#005f96"/><stop offset="0.394" stop-color="#005d96"/><stop offset="0.424" stop-color="#005c95"/><stop offset="0.455" stop-color="#005a94"/><stop offset="0.485" stop-color="#005993"/><stop offset="0.515" stop-color="#005792"/><stop offset="0.545" stop-color="#005591"/><stop offset="0.576" stop-color="#005290"/><stop offset="0.606" stop-color="#00508f"/><stop offset="0.636" stop-color="#004d8d"/><stop offset="0.667" stop-color="#004a8b"/><stop offset="0.697" stop-color="#004689"/><stop offset="0.727" stop-color="#004387"/><stop offset="0.758" stop-color="#003f85"/><stop offset="0.788" stop-color="#003b82"/><stop offset="0.818" stop-color="#003880"/><stop offset="0.848" stop-color="#00357d"/><stop offset="0.879" stop-color="#00317b"/><stop offset="0.909" stop-color="#002f78"/><stop offset="0.939" stop-color="#002c75"/><stop offset="0.970" stop-color="#002973"/><stop offset="1.000" stop-color="#002770"/></linearGradient><linearGradient id="r28"><stop offset="0.000" stop-color="#006398"/><stop offset="0.030" stop-color="#006398"/><stop offset="0.061" stop-color="#006399"/><stop offset="0.091" stop-color="#006399"/><stop offset="0.121" stop-color="#006399"/><stop offset="0.152" stop-color="#006399"/><stop offset="0.182" stop-color="#00639a"/><stop offset="0.212" stop-color="#006299"/><stop offset="0.242" stop-color="#006299"/><stop offset="0.273" stop-color="#006198"/><stop offset="0.303" stop-color="#006198"/><stop offset="0.333" stop-color="#006097"/><stop offset="0.364" stop-color="#005e96"/><stop offset="0.394" stop-color="#005d95"/><stop offset="0.424" stop-color="#005b94"/><stop offset="0.455" stop-color="#005a93"/><stop offset="0.485" stop-color="#005893"/><stop offset="0.515" stop-color="#005692"/><stop offset="0.545" stop-color="#005491"/><stop offset="0.576" stop-color="#00518f"/><stop offset="0.606" stop-color="#004f8e"/><stop offset="0.636" stop-color="#004c8c"/><stop offset="0.667" stop-color="#00498a"/><stop offset="0.697" stop-color="#004688"/><stop offset="0.727" stop-color="#004286"/><stop offset="0.758" stop-color="#003f84"/><stop offset="0.788" stop-color="#003b81"/><stop offset="0.818" stop-color="#00387f"/><stop offset="0.848" stop-color="#00347d"/><stop offset="0.879" stop-color="#00317a"/><stop offset="0.909" stop-color="#002f78"/><stop offset="0.939" stop-color="#002c75"/><stop offset="0.970" stop-color="#002973"/><stop offset="1.000" stop-color="#002770"/></linearGradient><linearGradient id="r29"><stop offset="0.000" stop-color="#006398"/><stop offset="0.030" stop-color="#006398"/><stop offset="0.061" stop-color="#006398"/><stop offset="0.091" stop-color="#006399"/><stop offset="0.121" stop-color="#006399"/><stop offset="0.152" stop-color="#006399"/><stop offset="0.182" stop-color="#006399"/><stop offset="0.212" stop-color="#006299"/><stop offset="0.242" stop-color="#006299"/><stop offset="0.273" stop-color="#006198"/><stop offset="0.303" stop-color="#006097"/><stop offset="0.333" stop-color="#005f97"/><stop offset="0.364" stop-color="#005e96"/><stop offset="0.394" stop-color="#005d95"/><stop offset="0.424" stop-color="#005b94"/><stop offset="0.455" stop-color="#005993"/><stop offset="0.485" stop-color="#005792"/><stop offset="0.515" stop-color="#005591"/><stop offset="0.545" stop-color="#005290"/><stop offset="0.576" stop-color="#00508f"/><stop offset="0.606" stop-color="#004e8d"/><stop offset="0.636" stop-color="#004b8b"/><stop offset="0.667" stop-color="#004889"/><stop offset="0.697" stop-color="#004587"/><stop offset="0.727" stop-color="#004185"/><stop offset="0.758" stop-color="#003e83"/><stop offset="0.788" stop-color="#003b80"/><stop offset="0.818" stop-color="#00377e"/><stop offset="0.848" stop-color="#00347c"/><stop offset="0.879" stop-color="#00317a"/><stop offset="0.909" stop-color="#002e77"/><stop offset="0.939" stop-color="#002c75"/><stop offset="0.970" stop-color="#002973"/><stop offset="1.000" stop-color="#002770"/></linearGradient><linearGradient id="r30"><stop offset="0.000" stop-color="#006398"/><stop offset="0.030" stop-color="#006398"/><stop offset="0.061" stop-color="#006398"/><stop offset="0.091" stop-color="#006398"/><stop offset="0.121" stop-color="#006399"/><stop offset="0.152" stop-color="#006399"/><stop offset="0.182" stop-color="#006299"/><stop offset="0.212" stop-color="#006299"/><stop offset="0.242" stop-color="#006198"/><stop offset="0.273" stop-color="#006198"/><stop offset="0.303" stop-color="#006097"/><stop offset="0.333" stop-color="#005f96"/><stop offset="0.364" stop-color="#005d95"/><stop offset="0.394" stop-color="#005c94"/><stop offset="0.424" stop-color="#005a94"/><stop offset="0.455" stop-color="#005893"/><stop offset="0.485" stop-color="#005692"/><stop offset="0.515" stop-color="#005490"/><stop offset="0.545" stop-color="#00528f"/><stop offset="0.576" stop-color="#004f8e"/><stop offset="0.606" stop-color="#004d8c"/><stop offset="0.636" stop-color="#004a8a"/><stop offset="0.667" stop-color="#004788"/><stop offset="0.697" stop-color="#004486"/><stop offset="0.727" stop-color="#004184"/><stop offset="0.758" stop-color="#003d82"/><stop offset="0.788" stop-color="#003a7f"/><stop offset="0.818" stop-color="#00377d"/><stop offset="0.848" stop-color="#00347b"/><stop offset="0.879" stop-color="#003179"/><stop offset="0.909" stop-color="#002e77"/><stop offset="0.939" stop-color="#002c75"/><stop offset="0.970" stop-color="#002972"/><stop offset="1.000" stop-color="#002770"/></linearGradient><linearGradient id="r31"><stop offset="0.000" stop-color="#006398"/><stop offset="0.030" stop-color="#006398"/><stop offset="0.061" stop-color="#006398"/><stop offset="0.091" stop-color="#006398"/><stop offset="0.121" stop-color="#006398"/><stop offset="0.152" stop-color="#006399"/><stop offset="0.182" stop-color="#006298"/><stop offset="0.212" stop-color="#006298"/><stop offset="0.242" stop-color="#006198"/><stop offset="0.273" stop-color="#006097"/><stop offset="0.303" stop-color="#006097"/><stop offset="0.333" stop-color="#005e96"/><stop offset="0.364" stop-color="#005d95"/><stop offset="0.394" stop-color="#005c94"/><stop offset="0.424" stop-color="#005a93"/><stop offset="0.455" stop-color="#005892"/><stop offset="0.485" stop-color="#005691"/><stop offset="0.515" stop-color="#005490"/><stop offset="0.545" stop-color="#00518f"/><stop offset="0.576" stop-color="#004f8d"/><stop offset="0.606" stop-color="#004c8c"/><stop offset="0.636" stop-color="#004a8a"/><stop offset="0.667" stop-color="#004788"/><stop offset="0.697" stop-color="#004485"/><stop offset="0.727" stop-color="#004183"/><stop offset="0.758" stop-color="#003d81"/><stop offset="0.788" stop-color="#003a7f"/><stop offset="0.818" stop-color="#00377d"/><stop offset="0.848" stop-color="#00347b"/><stop offset="0.879" stop-color="#003179"/><stop offset="0.909" stop-color="#002e77"/><stop offset="0.939" stop-color="#002c75"/><stop offset="0.970" stop-color="#002972"/><stop offset="1.000" stop-color="#002770"/></linearGradient><linearGradient id="r32"><stop offset="0.000" stop-color="#006398"/><stop offset="0.030" stop-color="#006398"/><stop offset="0.061" stop-color="#006398"/><stop offset="0.091" stop-color="#006398"/><stop offset="0.121" stop-color="#006398"/><stop offset="0.152" stop-color="#006399"/><stop offset="0.182" stop-color="#006298"/><stop offset="0.212" stop-color="#006298"/><stop offset="0.242" stop-color="#006198"/><stop offset="0.273" stop-color="#006097"/><stop offset="0.303" stop-color="#006097"/><stop offset="0.333" stop-color="#005e96"/><stop offset="0.364" stop-color="#005d95"/><stop offset="0.394" stop-color="#005c94"/><stop offset="0.424" stop-color="#005a93"/><stop offset="0.455" stop-color="#005892"/><stop offset="0.485" stop-color="#005691"/><stop offset="0.515" stop-color="#005490"/><stop offset="0.545" stop-color="#00518f"/><stop offset="0.576" stop-color="#004f8d"/><stop offset="0.606" stop-color="#004c8c"/><stop offset="0.636" stop-color="#004a8a"/><stop offset="0.667" stop-color="#004788"/><stop offset="0.697" stop-color="#004485"/><stop offset="0.727" stop-color="#004183"/><stop offset="0.758" stop-color="#003d81"/><stop offset="0.788" stop-color="#003a7f"/><stop offset="0.818" stop-color="#00377d"/><stop offset="0.848" stop-color="#00347b"/><stop offset="0.879" stop-color="#003179"/><stop offset="0.909" stop-color="#002e77"/><stop offset="0.939" stop-color="#002c75"/><stop offset="0.970" stop-color="#002972"/><stop offset="1.000" stop-color="#002770"/></linearGradient><linearGradient id="r33"><stop offset="0.000" stop-color="#006398"/><stop offset="0.030" stop-color="#006398"/><stop offset="0.061" stop-color="#006398"/><stop offset="0.091" stop-color="#006398"/><stop offset="0.121" stop-color="#006398"/><stop offset="0.152" stop-color="#006399"/><stop offset="0.182" stop-color="#006298"/><stop offset="0.212" stop-color="#006298"/><stop offset="0.242" stop-color="#006198"/><stop offset="0.273" stop-color="#006097"/><stop offset="0.303" stop-color="#006097"/><stop offset="0.333" stop-color="#005e96"/><stop offset="0.364" stop-color="#005d95"/><stop offset="0.394" stop-color="#005c94"/><stop offset="0.424" stop-color="#005a93"/><stop offset="0.455" stop-color="#005892"/><stop offset="0.485" stop-color="#005691"/><stop offset="0.515" stop-color="#005490"/><stop offset="0.545" stop-color="#00518f"/><stop offset="0.576" stop-color="#004f8d"/><stop offset="0.606" stop-color="#004c8c"/><stop offset="0.636" stop-color="#004a8a"/><stop offset="0.667" stop-color="#004788"/><stop offset="0.697" stop-color="#004485"/><stop offset="0.727" stop-color="#004183"/><stop offset="0.758" stop-color="#003d81"/><stop offset="0.788" stop-color="#003a7f"/><stop offset="0.818" stop-color="#00377d"/><stop offset="0.848" stop-color="#00347b"/><stop offset="0.879" stop-color="#003179"/><stop offset="0.909" stop-color="#002e77"/><stop offset="0.939" stop-color="#002c75"/><stop offset="0.970" stop-color="#002972"/><stop offset="1.000" stop-color="#002770"/></linearGradient><filter id="fb" x="-5%" y="-10%" width="110%" height="120%"><feGaussianBlur stdDeviation="10 20"/></filter></defs><g filter="url(#fb)"><rect x="-40" y="-80" width="1713" height="33" fill="url(#r0)"/><rect x="-40" y="-48" width="1713" height="33" fill="url(#r1)"/><rect x="-40" y="-16" width="1713" height="33" fill="url(#r2)"/><rect x="-40" y="16" width="1713" height="33" fill="url(#r3)"/><rect x="-40" y="48" width="1713" height="33" fill="url(#r4)"/><rect x="-40" y="80" width="1713" height="33" fill="url(#r5)"/><rect x="-40" y="112" width="1713" height="33" fill="url(#r6)"/><rect x="-40" y="144" width="1713" height="33" fill="url(#r7)"/><rect x="-40" y="176" width="1713" height="33" fill="url(#r8)"/><rect x="-40" y="208" width="1713" height="33" fill="url(#r9)"/><rect x="-40" y="240" width="1713" height="33" fill="url(#r10)"/><rect x="-40" y="272" width="1713" height="33" fill="url(#r11)"/><rect x="-40" y="304" width="1713" height="33" fill="url(#r12)"/><rect x="-40" y="336" width="1713" height="33" fill="url(#r13)"/><rect x="-40" y="368" width="1713" height="33" fill="url(#r14)"/><rect x="-40" y="400" width="1713" height="33" fill="url(#r15)"/><rect x="-40" y="432" width="1713" height="33" fill="url(#r16)"/><rect x="-40" y="464" width="1713" height="33" fill="url(#r17)"/><rect x="-40" y="496" width="1713" height="33" fill="url(#r18)"/><rect x="-40" y="528" width="1713" height="33" fill="url(#r19)"/><rect x="-40" y="560" width="1713" height="33" fill="url(#r20)"/><rect x="-40" y="592" width="1713" height="33" fill="url(#r21)"/><rect x="-40" y="624" width="1713" height="33" fill="url(#r22)"/><rect x="-40" y="656" width="1713" height="33" fill="url(#r23)"/><rect x="-40" y="688" width="1713" height="33" fill="url(#r24)"/><rect x="-40" y="720" width="1713" height="33" fill="url(#r25)"/><rect x="-40" y="752" width="1713" height="33" fill="url(#r26)"/><rect x="-40" y="784" width="1713" height="33" fill="url(#r27)"/><rect x="-40" y="816" width="1713" height="33" fill="url(#r28)"/><rect x="-40" y="848" width="1713" height="33" fill="url(#r29)"/><rect x="-40" y="880" width="1713" height="33" fill="url(#r30)"/><rect x="-40" y="912" width="1713" height="33" fill="url(#r31)"/><rect x="-40" y="944" width="1713" height="33" fill="url(#r32)"/><rect x="-40" y="976" width="1713" height="33" fill="url(#r33)"/></g><!--/F-->
<defs><filter id="bl"><feGaussianBlur stdDeviation="18"/></filter><filter id="bl2"><feGaussianBlur stdDeviation="1"/></filter></defs>
<filter id="bl3"><feGaussianBlur stdDeviation="2.5"/></filter><radialGradient id="gl" cx="1410" cy="385" r="110" gradientUnits="userSpaceOnUse"><stop offset="0" stop-color="#0058d0" stop-opacity="0.45"/><stop offset="1" stop-color="#0058d0" stop-opacity="0"/></radialGradient><rect x="1250" y="250" width="340" height="300" fill="url(#gl)"/><linearGradient id="cg" x1="300" y1="0" x2="1387" y2="0" gradientUnits="userSpaceOnUse"><stop offset="0" stop-color="#40b0ff" stop-opacity="0.02"/><stop offset="0.55" stop-color="#40b0ff" stop-opacity="0.05"/><stop offset="1" stop-color="#40b0ff" stop-opacity="0.13"/></linearGradient><polygon points="-200,-65 1387,345 1076,620 -200,770" fill="url(#cg)" filter="url(#bl3)"/>
<line x1="700" y1="142" x2="1387" y2="345" stroke="#5ab0e0" stroke-width="1.5" opacity="0.25" filter="url(#bl2)"/>
<filter id="bl4"><feGaussianBlur stdDeviation="6"/></filter><linearGradient id="lbg" x1="0" y1="0" x2="1076" y2="0" gradientUnits="userSpaceOnUse"><stop offset="0" stop-color="#60c0f0" stop-opacity="0"/><stop offset="0.6" stop-color="#60c0f0" stop-opacity="0.05"/><stop offset="1" stop-color="#60c0f0" stop-opacity="0.12"/></linearGradient><polygon points="0,730 1076,616 1076,624 0,770" fill="url(#lbg)" filter="url(#bl4)"/>
<g fill="#0e64a0" fill-opacity="0.97" stroke="#3cbcc8" stroke-width="1.2" stroke-opacity="0.6">
<polygon points="1076.5,388 1208.5,371 1208.5,499.5 1076.5,499.5"/>
<polygon points="1216.5,368 1387,345 1387,499.5 1216.5,499.5"/>
<polygon points="1076.5,507.5 1208.5,507.5 1208.5,637.5 1076.5,620.5"/>
<polygon points="1216.5,507.5 1387,507.5 1387,663 1216.5,641"/>
</g>
<line x1="1077" y1="619.5" x2="1208" y2="601" stroke="#3cbcc8" stroke-width="1" opacity="0.45"/><line x1="1217" y1="599.5" x2="1386.5" y2="575.5" stroke="#3cbcc8" stroke-width="1" opacity="0.45"/>
</svg>
<div id="band"></div>
<div class="abs" style="left:1631px;top:0;width:2px;height:31px;background:#000"></div>
<!-- desktops -->
<div class="dlabel" style="left:43px">Bureau 1</div>
<div class="dlabel" style="left:195px;color:#b9c8d4">Bureau 2</div>
<div class="dlabel" style="left:348px">Nouveau bureau</div>
<div class="dthumb" style="left:42px;border:2px solid #86bde6;background:radial-gradient(ellipse 40px 35px at 106px 40px,rgba(0,110,255,.55),rgba(0,110,255,0)),linear-gradient(100deg,#00a6f4 0%,#0098f2 35%,#0070e8 60%,#0048d0 85%,#0038b8 100%)">
<svg class="abs" style="left:84px;top:27px" width="28" height="28" viewBox="0 0 28 28"><g fill="#3ab4ff" fill-opacity=".55"><polygon points="1,4 12,2.5 12,13 1,13"/><polygon points="13,2.3 25,0.5 25,13 13,13"/><polygon points="1,14 12,14 12,24.5 1,23"/><polygon points="13,14 25,14 25,26.5 13,24.8"/></g></svg></div>
<div class="dthumb" style="left:195px;top:26px;width:137px;height:75px;border:1px solid #2b5f82;background:radial-gradient(ellipse 40px 35px at 100px 38px,rgba(0,60,150,.45),rgba(0,60,150,0)),linear-gradient(100deg,#00609c 0%,#005a98 35%,#00468c 60%,#002a78 85%,#002068 100%)">
<svg class="abs" style="left:83px;top:26px" width="28" height="28" viewBox="0 0 28 28"><g fill="#2a78c0" fill-opacity=".38"><polygon points="1,4 12,2.5 12,13 1,13"/><polygon points="13,2.3 25,0.5 25,13 13,13"/><polygon points="1,14 12,14 12,24.5 1,23"/><polygon points="13,14 25,14 25,26.5 13,24.8"/></g></svg></div>
<div class="dthumb" style="left:347px;top:26px;width:135px;height:75px;border:1px solid #245878;background:#0f3752"></div>
<div class="abs" style="left:403px;top:63px;width:23px;height:2px;background:#e8eef2"></div>
<div class="abs" style="left:413.5px;top:52px;width:2px;height:23px;background:#e8eef2"></div>


<!-- ===== EDGE WINDOW ===== -->
<svg class="abs" style="left:41px;top:121px" width="24" height="24" viewBox="0 0 24 24"><defs>
<linearGradient id="eb" x1="0" y1="0" x2="0.2" y2="1"><stop offset="0" stop-color="#1e86e8"/><stop offset="1" stop-color="#0a4cb0"/></linearGradient>
<linearGradient id="et" x1="0" y1="0" x2="1" y2="0.5"><stop offset="0" stop-color="#3cb0f8"/><stop offset="0.5" stop-color="#2cb8d4"/><stop offset="1" stop-color="#4ccc70"/></linearGradient>
<radialGradient id="eh" cx="0.5" cy="0.5" r="0.5"><stop offset="0" stop-color="#0a3e86"/><stop offset="1" stop-color="#0d56b0"/></radialGradient>
</defs><circle cx="11.5" cy="11.6" r="10.6" fill="url(#eb)"/>
<ellipse cx="10.8" cy="12.3" rx="3.6" ry="3.4" fill="url(#eh)"/>
<path d="M0.9,11.2 C0.9,5.2 5.6,1 11.5,1 C17.8,1 22.1,5.6 22.1,10.8 C22.1,14.4 19.8,16.2 16.6,16.2 C14.4,16.2 13,14.8 13,13 C13,10.4 11,8.6 8.4,8.6 C5,8.6 2.2,9.8 0.9,11.2Z" fill="url(#et)"/></svg>
<div class="ttl" style="left:70px;top:126px">Nouvel onglet - Personnel - Microsoft Edge</div>
<svg class="abs" style="left:433px;top:126px" width="13" height="13" viewBox="0 0 13 13"><path d="M1,1 L12,12 M12,1 L1,12" stroke="#9fd4f4" stroke-width="1.6"/></svg>
<div class="abs" style="left:42px;top:146px;width:409px;height:224px;border:1.5px solid #d2f2ff;box-shadow:0 0 1.5px rgba(160,220,255,.8);background:#4c4c4c"></div>
<div class="abs" id="edge" style="left:45px;top:149px;width:403px;height:218px;background:#f4f4f4;overflow:hidden">
  <div class="abs" style="left:0;top:0;width:403px;height:6px;background:#dfe1e5"></div>
  <div class="abs" style="left:0;top:0;width:51px;height:6px;background:#fafafa"></div>
  <div class="abs" style="left:0;top:6px;width:403px;height:14px;background:#f9f9fa"></div>
  <div class="abs" style="left:29px;top:7px;width:331px;height:6px;background:#fff;border:1px solid #c8ccd2"></div>
  <div class="abs" style="left:366px;top:9px;width:4px;height:2px;background:#777"></div><div class="abs" style="left:375px;top:8px;width:4px;height:3px;background:#444"></div><div class="abs" style="left:384px;top:8px;width:3px;height:3px;background:#333;transform:rotate(45deg)"></div>
  <div class="abs" style="left:386px;top:7px;width:6px;height:6px;border-radius:50%;background:#3cb0a0"></div><div class="abs" style="left:372px;top:1px;width:28px;height:2px;background:repeating-linear-gradient(90deg,#555 0 4px,transparent 4px 10px)"></div>
  <div class="abs" style="left:2px;top:14px;font:3.6px/5px 'Liberation Sans',sans-serif;color:#222;white-space:nowrap;transform:scaleX(0.62);transform-origin:0 0;-webkit-text-stroke:0.15px #333">Pour accéder aux favoris, sélectionnez * puis faites-les glisser vers la <span style="color:#2a6ac0">Barre des favoris. Importer des favoris</span></div>
  <div class="abs" style="left:0;top:20px;width:400px;height:56px;background:linear-gradient(180deg,#52626a 0%,#64767c 16%,#5a8298 38%,#5a92b2 65%,#66a6ca 100%)"></div>
  <div class="abs" style="left:0;top:26px;width:180px;height:32px;background:linear-gradient(172deg,rgba(30,60,80,0) 0%,rgba(30,60,80,.35) 45%,rgba(30,60,80,.0) 75%)"></div><div class="abs" style="left:0;top:50px;width:120px;height:26px;background:linear-gradient(165deg,rgba(120,190,220,0) 0%,rgba(120,190,220,.25) 100%)"></div>
  <div class="abs" style="left:190px;top:20px;width:210px;height:30px;background:radial-gradient(ellipse 110px 22px at 150px 6px,rgba(50,60,60,.75),rgba(50,60,60,0))"></div>
  <div class="abs" style="left:118px;top:27px;width:162px;height:9px;background:#fff"></div>
  <div class="abs" style="left:89px;top:46px;width:26px;height:20px;background:#fff;border-radius:1px"></div>
  <div class="abs" style="left:99px;top:49px;width:5px;height:6px;background:#e05030;border-radius:50%"></div>
  <div class="abs" style="left:117px;top:46px;width:26px;height:20px;background:#fff;border-radius:1px"></div><div class="abs" style="left:127px;top:55px;width:6px;height:1px;background:#aaa"></div><div class="abs" style="left:129.5px;top:52.5px;width:1px;height:6px;background:#aaa"></div>
  <div class="abs" style="left:145px;top:46px;width:26px;height:20px;border:1px solid rgba(255,255,255,.35)"></div>
  <div class="abs" style="left:173px;top:46px;width:26px;height:20px;border:1px solid rgba(255,255,255,.35)"></div>
  <div class="abs" style="left:201px;top:46px;width:26px;height:20px;border:1px solid rgba(255,255,255,.35)"></div>
  <div class="abs" style="left:229px;top:46px;width:26px;height:20px;border:1px solid rgba(255,255,255,.35)"></div>
  <div class="abs" style="left:257px;top:46px;width:26px;height:20px;border:1px solid rgba(255,255,255,.35)"></div><div class="abs" style="left:284px;top:46px;width:26px;height:20px;border:1px solid rgba(255,255,255,.35)"></div>
  <div class="abs" style="left:12px;top:27px;font:bold 4px/6px 'Liberation Sans',sans-serif;color:#eee;white-space:nowrap">11 · 21 °</div>
  <div class="abs" style="left:399px;top:20px;width:4px;height:76px;background:#6a6a6a"></div>
  <div class="abs" style="left:64px;top:79px;font:3.4px/5px 'Liberation Sans',sans-serif;color:#333;white-space:nowrap">Mon fil d'actualité</div><div class="abs" style="left:96px;top:79px;font:3.4px/5px 'Liberation Sans',sans-serif;color:#888;white-space:nowrap">Coronavirus</div><div class="abs" style="left:130px;top:79px;font:3.4px/5px 'Liberation Sans',sans-serif;color:#888;white-space:nowrap">Actual.</div><div class="abs" style="left:146px;top:79px;font:3.4px/5px 'Liberation Sans',sans-serif;color:#888;white-space:nowrap">Divertissement</div><div class="abs" style="left:185px;top:79px;font:3.4px/5px 'Liberation Sans',sans-serif;color:#888;white-space:nowrap">Style de vie</div><div class="abs" style="left:217px;top:79px;font:3.4px/5px 'Liberation Sans',sans-serif;color:#888;white-space:nowrap">Sport</div><div class="abs" style="left:231px;top:79px;font:3.4px/5px 'Liberation Sans',sans-serif;color:#888;white-space:nowrap">Argent</div><div class="abs" style="left:247px;top:79px;font:3.4px/5px 'Liberation Sans',sans-serif;color:#888;white-space:nowrap">Voyage</div><div class="abs" style="left:264px;top:79px;font:3.4px/5px 'Liberation Sans',sans-serif;color:#888;white-space:nowrap">Auto</div><div class="abs" style="left:309px;top:79px;font:3.4px/5px 'Liberation Sans',sans-serif;color:#888;white-space:nowrap">Personnaliser</div>
  <!-- row1 -->
  <div class="abs" style="left:65px;top:87px;width:66px;height:73px;background:linear-gradient(180deg,#4a6a8c 0,#52708e 11px,#8c8270 13px,#9a8c74 19px,#7896ae 21px,#84a0b4 33px,#d4dee6 35px,#b0a28a 37px,#9a8670 48px,#6a5a4c 56px,#1a1614 73px)"></div>
  <div class="abs" style="left:131px;top:87px;width:66px;height:73px;background:#35292a"></div>
  <div class="abs" style="left:133px;top:89px;width:62px;height:50px;background:radial-gradient(circle at 2px 2px,rgba(235,230,230,.3) 0 1.2px,transparent 1.5px) 0 0/13px 6px,repeating-linear-gradient(180deg,rgba(120,100,100,.15) 0 1px,transparent 1px 6px)"></div>
  <div class="abs" style="left:151px;top:122px;width:46px;height:38px;border-radius:45% 50% 0 0;background:#1e2434"></div>
  <div class="abs" style="left:164px;top:121px;width:12px;height:16px;background:#e8e8ec;clip-path:polygon(0 0,100% 0,60% 100%,40% 100%)"></div>
  <div class="abs" style="left:168px;top:124px;width:3px;height:14px;background:#1a2030"></div>
  <div class="abs" style="left:163px;top:98px;width:20px;height:26px;border-radius:45% 45% 40% 40%;background:#b88a78"></div>
  <div class="abs" style="left:165px;top:97px;width:17px;height:6px;border-radius:50% 50% 0 0;background:#3a2a24"></div>
  <div class="abs" style="left:181px;top:118px;width:12px;height:16px;background:#c8ccd0;transform:rotate(-20deg)"></div>
  <div class="abs" style="left:65px;top:133px;width:132px;height:27px;background:linear-gradient(180deg,rgba(0,0,0,0),rgba(0,0,0,.75) 60%,rgba(0,0,0,.9))"></div>
  <div class="abs" style="left:69px;top:137px;font:bold 3.6px/5.8px 'Liberation Sans',sans-serif;color:#e8e8e8;white-space:nowrap">Coronavirus : le port du<br>masque n'est plus obligatoire<br>sur les plages de la Côte</div>
  <div class="abs" style="left:136px;top:137px;font:bold 3.6px/5.8px 'Liberation Sans',sans-serif;color:#e8e8e8;white-space:nowrap">Gérald Darmanin annonce<br>une hausse des effectifs<br>de police pour la rentrée</div>
  <div class="abs" style="left:69px;top:155px;width:3px;height:3px;border-radius:50%;background:#e03030"></div>
  <div class="abs" style="left:100px;top:157px;width:55px;height:1px;background:repeating-linear-gradient(90deg,#bbb 0 1px,transparent 1px 3px)"></div>
<div class="abs" style="left:202px;top:87px;width:63px;height:74px;background:#fff"></div>
  <div class="abs" style="left:202px;top:87px;width:63px;height:37px;background:linear-gradient(90deg,#7a4818 0%,#9a6028 40%,#8a5220 70%,#6a3c14 100%);overflow:hidden">
    <div class="abs" style="left:14px;top:-3px;width:30px;height:38px;border-radius:3px;background:#d8dcd8"></div>
    <div class="abs" style="left:16px;top:-3px;width:26px;height:33px;background:linear-gradient(160deg,#5aa8d8 0%,#a8d8f0 35%,#d0f0f8 55%,#60d0a0 85%,#e8f0f0 100%)"></div>
    <div class="abs" style="left:-4px;top:16px;width:36px;height:24px;border-radius:50% 40% 0 0;background:#4a3024;transform:rotate(-15deg)"></div>
  </div>
  <div class="abs" style="left:206px;top:126px;font:3.4px/4px 'Liberation Sans',sans-serif;color:#999">APPLE</div>
  <div class="abs" style="left:206px;top:131px;font:bold 4.2px/6px 'Liberation Sans',sans-serif;color:#333;white-space:nowrap">Le "Apple ID" devient une<br>identité de votre vie dans<br>les services Apple gratuits</div>
  <div class="abs" style="left:206px;top:154px;width:12px;height:2px;background:#9ab"></div>
  <div class="abs" style="left:255px;top:153px;width:2px;height:4px;background:#666"></div>
  <div class="abs" style="left:270px;top:87px;width:63px;height:74px;background:#fff"></div>
  <div class="abs" style="left:275px;top:91px;font:3.3px/4px 'Liberation Sans',sans-serif;color:#999;white-space:nowrap">Le Perreux-sur-Marne, Île-de-Fra ›</div>
  <div class="abs" style="left:275px;top:101px;width:10px;height:11px;border-radius:50%;background:#f0c420;box-shadow:inset 4px -2px 0 #fff"></div>
  <div class="abs" style="left:286px;top:100px;font:bold 11px/12px 'Liberation Sans',sans-serif;color:#444;letter-spacing:-0.5px">27</div>
  <div class="abs" style="left:300px;top:101px;font:6px/7px 'Liberation Sans',sans-serif;color:#888">°F</div>
  <div class="abs" style="left:322px;top:103px;width:5px;height:6px;border-top:1px solid #aaa;border-bottom:1px solid #aaa"></div>
  <div class="abs" style="left:275px;top:120px;width:53px;height:28px;background:repeating-linear-gradient(90deg,#f1f2f4 0 9.5px,#fff 9.5px 10.9px)"></div>
  <div class="abs" style="left:287px;top:128px;width:5px;height:4px;border-radius:50%;background:#f0d060"></div>
  <div class="abs" style="left:298px;top:128px;width:5px;height:4px;border-radius:50%;background:#f0d070"></div>
  <div class="abs" style="left:309px;top:128px;width:5px;height:4px;border-radius:50%;background:#f0d060"></div>
  <div class="abs" style="left:320px;top:128px;width:5px;height:4px;border-radius:50%;background:#f4e090"></div>
  <div class="abs" style="left:275px;top:151px;font:3.3px/4.5px 'Liberation Sans',sans-serif;color:#888;white-space:nowrap">Données fournies par Foreca<br>Mis à jour il y a 6 min</div>
  <svg class="abs" style="left:272px;top:125px" width="13" height="17" viewBox="0 0 13 17"><path d="M1,1 L1,14 L4.5,10.5 L7.5,16 L9.5,15 L6.8,9.6 L11.5,9.6Z" fill="#fff" stroke="#333" stroke-width="1"/></svg>
  <!-- row2 -->
  <div class="abs" style="left:64px;top:166px;width:64px;height:52px;background:#fff"></div>
  <div class="abs" style="left:64px;top:166px;width:64px;height:36px;background:linear-gradient(90deg,#2a241e 0%,#4a3a2c 40%,#3a3024 70%,#5a4a3a 100%);overflow:hidden">
    <div class="abs" style="left:20px;top:4px;width:8px;height:9px;border-radius:50%;background:#2a1e18"></div>
    <div class="abs" style="left:8px;top:12px;width:26px;height:26px;border-radius:40% 40% 0 0;background:#dcdce4"></div>
    <div class="abs" style="left:36px;top:14px;width:20px;height:16px;border-radius:30%;background:#6a5848"></div>
    <div class="abs" style="left:42px;top:2px;width:16px;height:10px;background:#4a3e30"></div>
  </div>
  <div class="abs" style="left:68px;top:206px;font:3.3px/4px 'Liberation Sans',sans-serif;color:#999">NEWS</div>
  <div class="abs" style="left:68px;top:212px;font:bold 4.2px/6px 'Liberation Sans',sans-serif;color:#333;white-space:nowrap">Mort de Jean-Pierre Adams</div>
  <div class="abs" style="left:133px;top:166px;width:64px;height:52px;background:linear-gradient(90deg,#585048 0%,#8a6a58 20%,#c09888 45%,#a88070 65%,#d8d8d8 80%,#e0e0e0 100%);overflow:hidden">
    <div class="abs" style="left:2px;top:-6px;width:44px;height:22px;border-radius:50%;background:#5a4232"></div>
    <div class="abs" style="left:8px;top:6px;width:36px;height:44px;border-radius:45% 45% 40% 40%;background:#c49684"></div>
    <div class="abs" style="left:38px;top:34px;width:30px;height:22px;border-radius:40% 0 0 0;background:#1e1e20"></div>
    <div class="abs" style="left:18px;top:20px;width:20px;height:3px;background:#6a4a3a"></div>
  </div>
  <div class="abs" style="left:202px;top:166px;width:64px;height:52px;background:#fff"></div>
  <div class="abs" style="left:202px;top:166px;width:64px;height:36px;background:linear-gradient(90deg,#b8b0a4 0%,#d0c8bc 30%,#d8d0c0 60%,#e0c888 85%,#e8c060 100%);overflow:hidden">
    <div class="abs" style="left:12px;top:2px;width:26px;height:30px;background:#ececec"></div>
    <div class="abs" style="left:16px;top:6px;width:14px;height:20px;border-radius:45%;background:repeating-linear-gradient(90deg,#666 0 1px,#ccc 1px 2.5px)"></div>
    <div class="abs" style="left:38px;top:24px;width:26px;height:12px;background:#c8bca8"></div>
  </div>
  <div class="abs" style="left:205px;top:206px;font:bold 4.2px/6px 'Liberation Sans',sans-serif;color:#333;white-space:nowrap">ARNAQUE À LA CLIM !</div>
  <div class="abs" style="left:270px;top:166px;width:63px;height:34px;background:#fff"></div>
  <div class="abs" style="left:274px;top:170px;font:3.3px/4px 'Liberation Sans',sans-serif;color:#999">actu.fr</div>
  <div class="abs" style="left:274px;top:175px;font:bold 4.2px/6px 'Liberation Sans',sans-serif;color:#333;white-space:nowrap">Coronavirus: dans quel<br>quartier l'épidémie progresse<br>le plus</div>
  <div class="abs" style="left:274px;top:195px;width:3px;height:3px;background:#3a80d0"></div>
  <div class="abs" style="left:270px;top:205px;width:63px;height:13px;background:linear-gradient(90deg,#6a4020 0%,#c08040 20%,#e0a050 35%,#8a5a30 55%,#d0a060 75%,#6a4020 100%)"></div>
</div>

<!-- ===== EXPLORER ===== -->
<svg class="abs" style="left:472px;top:123px" width="16" height="18" viewBox="0 0 16 18"><path d="M5,0 H11 V8 H15.5 L8,17 L0.5,8 H5Z" fill="#3d9ee8"/></svg>
<div class="ttl" style="left:497px;top:126px">Téléchargements</div>
<div class="abs" id="expl" style="left:471px;top:146px;width:379px;height:220px;background:#fff;overflow:hidden;box-shadow:1px 1px 0 rgba(10,40,70,.45)">
  <div class="abs" style="left:2px;top:2px;width:4px;height:6px;background:#3a80d0"></div>
  <div class="abs" style="left:11px;top:3px;width:4px;height:5px;background:#ccc"></div>
  <div class="abs" style="left:17px;top:3px;width:5px;height:5px;background:#f0c850"></div>
  
  <div class="abs" style="left:0;top:10px;width:17px;height:7px;background:#1a6fc4"></div>
  
  
  
  <div class="abs" style="left:0;top:18px;width:379px;height:1px;background:#eee"></div>
  <div class="abs" style="left:4px;top:22px;width:4px;height:2px;background:#c07070"></div>
  <div class="abs" style="left:15px;top:21px;width:3px;height:4px;background:#6a9ad0"></div>
  <div class="abs" style="left:30px;top:22px;width:12px;height:2px;background:#888"></div>
  <div class="abs" style="left:45px;top:21px;width:173px;height:6px;border:1px solid #eee"></div>
  
  <div class="abs" style="left:265px;top:20px;width:110px;height:9px;border:1px solid #eee"></div>
  
  <div class="abs" style="left:372px;top:10px;width:5px;height:5px;border-radius:50%;background:#2b6cc0"></div>
  
  
  
  
  
  <div class="abs" style="left:2px;top:50px;width:58px;height:7px;background:#d9d9d9"></div>
  <div class="abs" style="left:63px;top:30px;width:1px;height:180px;background:#f2f2f2"></div>
  <div class="abs" style="left:8px;top:36.1px;width:4px;height:4px;background:#3a7fd0"></div><div class="ext" style="left:14px;top:34.9px">Accès rapide</div><div class="abs" style="left:10px;top:43.5px;width:4px;height:4px;background:#2b78d0"></div><div class="ext" style="left:16px;top:42.3px">Bureau</div><div class="abs" style="left:10px;top:51.0px;width:4px;height:4px;background:#3a80d0"></div><div class="ext" style="left:16px;top:49.8px">Téléchargements</div><div class="abs" style="left:10px;top:58.6px;width:4px;height:4px;background:#c8c8c8"></div><div class="ext" style="left:16px;top:57.4px">Documents</div><div class="abs" style="left:10px;top:66.0px;width:4px;height:4px;background:#6a8ab8"></div><div class="ext" style="left:16px;top:64.8px">Images</div><div class="abs" style="left:10px;top:73.5px;width:4px;height:4px;background:#f0d070"></div><div class="ext" style="left:16px;top:72.3px">1.Business</div><div class="abs" style="left:10px;top:81.0px;width:4px;height:4px;background:#3a80d0"></div><div class="ext" style="left:16px;top:79.8px">Musique</div><div class="abs" style="left:10px;top:88.4px;width:4px;height:4px;background:#555"></div><div class="ext" style="left:16px;top:87.2px">Vidéos</div><div class="abs" style="left:8px;top:98.0px;width:4px;height:4px;background:#2b78d0"></div><div class="ext" style="left:14px;top:96.8px">OneDrive</div><div class="abs" style="left:8px;top:107.9px;width:4px;height:4px;background:#6ab0e0"></div><div class="ext" style="left:14px;top:106.7px">Ce PC</div><div class="abs" style="left:10px;top:115.5px;width:4px;height:4px;background:#2b78d0"></div><div class="ext" style="left:16px;top:114.3px">Bureau</div><div class="abs" style="left:10px;top:123.0px;width:4px;height:4px;background:#c8c8c8"></div><div class="ext" style="left:16px;top:121.8px">Documents</div><div class="abs" style="left:10px;top:130.4px;width:4px;height:4px;background:#6a8ab8"></div><div class="ext" style="left:16px;top:129.2px">Images</div><div class="abs" style="left:10px;top:137.8px;width:4px;height:4px;background:#3a80d0"></div><div class="ext" style="left:16px;top:136.6px">Musique</div><div class="abs" style="left:10px;top:145.2px;width:4px;height:4px;background:#40a0e0"></div><div class="ext" style="left:16px;top:144.0px">Objets 3D</div><div class="abs" style="left:10px;top:152.6px;width:4px;height:4px;background:#3a80d0"></div><div class="ext" style="left:16px;top:151.4px">Téléchargements</div><div class="abs" style="left:10px;top:160.0px;width:4px;height:4px;background:#555"></div><div class="ext" style="left:16px;top:158.8px">Vidéos</div><div class="abs" style="left:10px;top:167.4px;width:4px;height:4px;background:#888"></div><div class="ext" style="left:16px;top:166.2px">Disque local (C:)</div><div class="abs" style="left:10px;top:174.9px;width:4px;height:4px;background:#666"></div><div class="ext" style="left:16px;top:173.7px">CD-RW (D:)</div><div class="abs" style="left:10px;top:182.3px;width:4px;height:4px;background:#666"></div><div class="ext" style="left:16px;top:181.1px">DATA (E:)</div><div class="abs" style="left:8px;top:192.0px;width:4px;height:4px;background:#3a80d0"></div><div class="ext" style="left:14px;top:190.8px">Réseau</div><div class="ext" style="left:66.7px;top:30.5px;color:#888">Nom</div><div class="ext" style="left:146.0px;top:30.5px;color:#888">Modifié le</div><div class="ext" style="left:191.0px;top:30.5px;color:#888">Type</div><div class="ext" style="left:229.0px;top:30.5px;color:#888">Taille</div><div class="ext" style="left:205.0px;top:41.2px;color:#777">Ce dossier est vide.</div><div class="ext" style="left:45.0px;top:19.6px;color:#555">Ce PC</div><div class="ext" style="left:62.0px;top:19.6px;color:#333">Téléchargements</div><div class="ext" style="left:282.0px;top:19.6px;color:#999">Rechercher dans : Téléchargements</div><div class="ext" style="left:34.0px;top:1.3px;color:#bbb">Téléchargements</div><div class="ext" style="left:3.0px;top:9.8px;color:#fff">Fichier</div><div class="ext" style="left:23.0px;top:9.8px;color:#888">Accueil</div><div class="ext" style="left:41.0px;top:9.8px;color:#888">Partage</div><div class="ext" style="left:62.0px;top:9.8px;color:#888">Affichage</div><div class="ext" style="left:4.0px;top:213.3px;color:#888">0 élément(s)</div>
  
  <div class="abs" style="left:364px;top:213px;width:12px;height:4px;background:#cfd8e0"></div>
</div>
<!-- ===== BLEACHBIT ===== -->
<svg class="abs" style="left:42px;top:386px" width="22" height="21" viewBox="0 0 22 21"><path d="M4,8 L17,5 L21.5,16 L4,19.5Z" fill="#ece6da"/><path d="M17,5 L21.5,16 L20,16.5 L16,6Z" fill="#c8c0b0"/><path d="M1,14 Q2,9 7,10 Q11,11 11,15 L10,19.5 L2,19.5 Q0.5,17 1,14Z" fill="#f2c418"/><path d="M2,1 L8.5,10" stroke="#30a070" stroke-width="2.2"/><path d="M5.5,6 L9.5,9.5" stroke="#e04a20" stroke-width="2"/></svg>
<div class="ttl" style="left:70px;top:390px">BleachBit</div>
<div class="abs" id="bb" style="left:42px;top:410px;width:297px;height:223px;background:#272727;overflow:hidden;border:1.5px solid #2c3a42;border-top:0">
  <div class="abs" style="left:0;top:0;width:296px;height:19px;background:#3a3c3e"></div>
  <div class="abs" style="left:21px;top:2px;width:101px;height:15px;background:#313335"></div>
  <div class="abs" style="left:8px;top:9px;width:4px;height:3px;background:#d8c060"></div>
  <div class="abs" style="left:25px;top:7px;width:5px;height:6px;border-radius:50%;border:1px solid #6070d0"></div>
  <div class="bbt" style="left:31px;top:7px;color:#aaa;font-size:4.8px">Prévisualiser</div>
  <div class="abs" style="left:63px;top:7px;width:5px;height:6px;background:#e0d040;clip-path:polygon(100% 0,100% 100%,0 100%)"></div>
  <div class="bbt" style="left:70px;top:7px;color:#aaa;font-size:4.8px">Nettoyer</div>
  <div class="abs" style="left:94px;top:7px;width:6px;height:6px;border-radius:50%;border:1px solid #d03030"></div>
  <div class="bbt" style="left:102px;top:7px;color:#777;font-size:4.8px">Annuler</div>
  <div class="bbt" style="left:137px;top:7px;color:#ddd;font-size:4.8px;font-weight:bold">BleachBit</div>
  <div class="abs" style="left:244px;top:3px;width:13px;height:14px;background:#2e3032"></div>
  <div class="abs" style="left:248px;top:11px;width:5px;height:1px;background:#ccc"></div>
  <div class="abs" style="left:268px;top:9px;width:4px;height:3px;background:#aaa"></div>
  <div class="abs" style="left:283px;top:9px;width:3px;height:3px;background:#ccc"></div>
  <div class="abs" style="left:0;top:207px;width:296px;height:15px;background:#3c3f41"></div>
  <div class="abs" style="left:3px;top:21.9px;width:0;height:0;border-left:2px solid transparent;border-right:2px solid transparent;border-top:3px solid #bbb"></div><div class="bbt" style="left:9px;top:19.8px">Analyse approfondie</div><div class="abs" style="left:112px;top:20.9px;width:4px;height:4px;background:#3a3a3a;border:1px solid #505050"></div><div class="bbt" style="left:16px;top:28.4px">.DS_Store</div><div class="abs" style="left:112px;top:29.5px;width:4px;height:4px;background:#3a3a3a;border:1px solid #505050"></div><div class="bbt" style="left:16px;top:37.0px">Fichiers d'échange VIM du profil utilisateur</div><div class="abs" style="left:112px;top:38.1px;width:4px;height:4px;background:#3a3a3a;border:1px solid #505050"></div><div class="bbt" style="left:16px;top:45.5px">Fichiers d'échange VIM du système</div><div class="abs" style="left:112px;top:46.6px;width:4px;height:4px;background:#3a3a3a;border:1px solid #505050"></div><div class="bbt" style="left:16px;top:54.1px">Fichiers de sauvegarde</div><div class="abs" style="left:112px;top:55.2px;width:4px;height:4px;background:#3a3a3a;border:1px solid #505050"></div><div class="bbt" style="left:16px;top:62.7px">Fichiers temporaires</div><div class="abs" style="left:112px;top:63.8px;width:4px;height:4px;background:#3a3a3a;border:1px solid #505050"></div><div class="bbt" style="left:16px;top:71.3px">Thumbs.db</div><div class="abs" style="left:112px;top:72.4px;width:4px;height:4px;background:#3a3a3a;border:1px solid #505050"></div><div class="abs" style="left:3px;top:82.0px;width:0;height:0;border-left:2px solid transparent;border-right:2px solid transparent;border-top:3px solid #bbb"></div><div class="bbt" style="left:9px;top:79.9px">Internet Explorer</div><div class="abs" style="left:112px;top:81.0px;width:4px;height:4px;background:#3a3a3a;border:1px solid #505050"></div><div class="bbt" style="left:16px;top:88.4px">Cache</div><div class="abs" style="left:112px;top:89.5px;width:4px;height:4px;background:#3a3a3a;border:1px solid #505050"></div><div class="bbt" style="left:16px;top:97.0px">Cookies</div><div class="abs" style="left:112px;top:98.1px;width:4px;height:4px;background:#3a3a3a;border:1px solid #505050"></div><div class="bbt" style="left:16px;top:105.6px">Historique</div><div class="abs" style="left:112px;top:106.7px;width:4px;height:4px;background:#3a3a3a;border:1px solid #505050"></div><div class="bbt" style="left:16px;top:114.2px">Historique des formulaires</div><div class="abs" style="left:112px;top:115.3px;width:4px;height:4px;background:#3a3a3a;border:1px solid #505050"></div><div class="bbt" style="left:16px;top:122.8px">Historique des téléchargements</div><div class="abs" style="left:112px;top:123.9px;width:4px;height:4px;background:#3a3a3a;border:1px solid #505050"></div><div class="bbt" style="left:16px;top:131.3px">Journaux</div><div class="abs" style="left:112px;top:132.4px;width:4px;height:4px;background:#3a3a3a;border:1px solid #505050"></div><div class="abs" style="left:3px;top:142.0px;width:0;height:0;border-left:2px solid transparent;border-right:2px solid transparent;border-top:3px solid #bbb"></div><div class="bbt" style="left:9px;top:139.9px">Microsoft Office</div><div class="abs" style="left:112px;top:141.0px;width:4px;height:4px;background:#3a3a3a;border:1px solid #505050"></div><div class="bbt" style="left:16px;top:148.5px">Fichiers récemment utilisés</div><div class="abs" style="left:112px;top:149.6px;width:4px;height:4px;background:#3a3a3a;border:1px solid #505050"></div><div class="bbt" style="left:16px;top:157.1px">Journaux de débogage</div><div class="abs" style="left:112px;top:158.2px;width:4px;height:4px;background:#3a3a3a;border:1px solid #505050"></div><div class="abs" style="left:3px;top:167.8px;width:0;height:0;border-left:2px solid transparent;border-right:2px solid transparent;border-top:3px solid #bbb"></div><div class="bbt" style="left:9px;top:165.7px">Système</div><div class="abs" style="left:112px;top:166.8px;width:4px;height:4px;background:#3a3a3a;border:1px solid #505050"></div><div class="bbt" style="left:16px;top:174.2px">Corbeille</div><div class="abs" style="left:112px;top:175.3px;width:4px;height:4px;background:#3a3a3a;border:1px solid #505050"></div><div class="bbt" style="left:16px;top:182.8px">Espace disque libre</div><div class="abs" style="left:112px;top:183.9px;width:4px;height:4px;background:#3a3a3a;border:1px solid #505050"></div><div class="bbt" style="left:16px;top:191.4px">Fichiers temporaires</div><div class="abs" style="left:112px;top:192.5px;width:4px;height:4px;background:#3a3a3a;border:1px solid #505050"></div><div class="bbt" style="left:16px;top:200.0px">Journaux</div><div class="abs" style="left:112px;top:201.1px;width:4px;height:4px;background:#3a3a3a;border:1px solid #505050"></div><div class="bbt" style="left:122px;top:19.8px;font-size:5.05px">Accédez au menu de l'application en cliquant sur le logo de la barre de titre.</div>
</div>
<!-- ===== EXPERTS (selected) ===== -->
<div class="abs" style="left:347px;top:378px;width:399px;height:264px;border:2px solid #b4e6ff;border-left-width:3px;border-right-width:2px;box-shadow:inset 0 0 0 1px rgba(20,60,90,.35)"></div>
<svg class="abs" style="left:356px;top:384px" width="24" height="24" viewBox="0 0 24 24"><circle cx="11.5" cy="11.6" r="10.6" fill="url(#eb)"/>
<ellipse cx="10.8" cy="12.3" rx="3.6" ry="3.4" fill="url(#eh)"/>
<path d="M0.9,11.2 C0.9,5.2 5.6,1 11.5,1 C17.8,1 22.1,5.6 22.1,10.8 C22.1,14.4 19.8,16.2 16.6,16.2 C14.4,16.2 13,14.8 13,13 C13,10.4 11,8.6 8.4,8.6 C5,8.6 2.2,9.8 0.9,11.2Z" fill="url(#et)"/></svg>
<div class="ttl" style="left:386px;top:390px">Experts du Numérique, Windows, Cloud, Microsoft 365, Azure, A...</div>
<div class="abs" id="exp" style="left:358px;top:410px;width:378px;height:221px;background:#e9e9e9;overflow:hidden;border-right:1px solid #fff;border-bottom:1px solid #fff">
  <div class="abs" style="left:0;top:0;width:378px;height:9px;background:#d2d2d2"></div>
  <div class="abs" style="left:0;top:0;width:57px;height:9px;background:#f2f2f2"></div>
  <div class="abs" style="left:345px;top:0;width:11px;height:6px;background:#b8b8b8"></div>
  <div class="abs" style="left:0;top:9px;width:378px;height:10px;background:#fff"></div>
  <div class="abs" style="left:330px;top:12px;width:4px;height:4px;background:#444"></div>
  <div class="abs" style="left:341px;top:12px;width:5px;height:5px;border-radius:50%;background:#3cb8a8"></div>
  <div class="abs" style="left:0;top:19px;width:375px;height:90px;background:#1f8ad4"></div>
  <div class="abs" style="left:375px;top:19px;width:3px;height:202px;background:#e0e0e0"></div>
  <div class="abs" style="left:25px;top:84px;width:324px;height:12px;background:#343434"></div>
  <div class="abs" style="left:31px;top:89px;width:90px;height:2px;background:repeating-linear-gradient(90deg,#999 0 8px,transparent 8px 15px)"></div>
  <div class="abs" style="left:25px;top:96px;width:324px;height:125px;background:#fff"></div>
  <div class="abs" style="left:160px;top:62px;font:bold 21px/24px 'Liberation Sans',sans-serif;color:#fff;letter-spacing:-0.2px">Hitéa</div>
  <div class="abs" style="left:45px;top:22px;font:7px/9px 'Liberation Sans',sans-serif;color:#e8f4ff">Azure</div>
  <div class="abs" style="left:68px;top:32px;font:7px/9px 'Liberation Sans',sans-serif;color:#e8f4ff">aws</div>
  <div class="abs" style="left:37px;top:30px;width:40px;height:34px;border-radius:50%;border:2px dashed rgba(220,240,255,.6)"></div>
  <div class="abs" style="left:43px;top:36px;width:12px;height:10px;border-radius:50%;background:#e06a30"></div>
  <div class="abs" style="left:36px;top:43px;width:32px;height:18px;background:#123a60;border:1px solid #5a8ab0"></div>
  <div class="abs" style="left:33px;top:61px;width:38px;height:2px;background:#e0eef8"></div>
  <div class="abs" style="left:40px;top:49px;width:18px;height:3px;background:#c0d8ec"></div>
  <svg class="abs" style="left:100px;top:21px" width="50" height="26" viewBox="0 0 50 26"><path d="M4,20 Q0,20 1,15 Q2,10 8,11 Q9,4 16,5 Q20,1 25,5 Q30,2 33,8 Q38,6 40,11 Q47,11 48,17 Q49,22 44,23 L6,23Z" fill="#fff"/><circle cx="13" cy="13" r="3" fill="#333"/><circle cx="27" cy="14" r="3.5" fill="#333"/><circle cx="20" cy="15" r="1" fill="#333"/><circle cx="37" cy="17" r="1.5" fill="#333"/></svg>
  <div class="abs" style="left:111px;top:50px;width:19px;height:15px;background:#f5c842;border-radius:1px"></div>
  <div class="abs" style="left:111px;top:48px;width:8px;height:3px;background:#f5c842"></div>
  <div class="abs" style="left:118px;top:54px;width:5px;height:6px;border-radius:50%;background:#e07840"></div>
  <div class="abs" style="left:96px;top:70px;font:7px/9px 'Liberation Sans',sans-serif;color:#e8f4ff">PowerShell</div>
  <svg class="abs" style="left:184px;top:23px" width="22" height="10" viewBox="0 0 22 10"><path d="M2,9 Q0,9 1,6 Q2,3 6,4 Q8,0 12,2 Q16,0 17,4 Q21,4 21,7 Q21,9 19,9Z" fill="#e8f4ff"/></svg>
  <div class="abs" style="left:166px;top:35px;width:44px;height:24px;border-radius:50%;background:rgba(20,60,110,.55)"></div>
  <div class="abs" style="left:171px;top:36px;width:32px;height:20px;background:#e8e8e8"></div>
  <div class="abs" style="left:173px;top:38px;width:28px;height:16px;background:#e0643a"></div>
  <div class="abs" style="left:176px;top:43px;width:9px;height:9px;border-radius:50%;background:#c8c8c8"></div>
  <div class="abs" style="left:190px;top:42px;width:6px;height:6px;border-radius:50%;background:#333"></div>
  <div class="abs" style="left:181px;top:57px;width:12px;height:4px;background:#e8e8e8"></div>
  <div class="abs" style="left:225px;top:29px;font:7px/9px 'Liberation Sans',sans-serif;color:#e8f4ff;letter-spacing:-0.2px">Microsoft 365</div>
  <svg class="abs" style="left:228px;top:38px" width="28" height="18" viewBox="0 0 28 18"><path d="M3,16 Q0,16 1,12 Q2,9 6,9 Q7,3 13,3 Q19,2 20,8 Q26,8 27,12 Q27,16 24,16Z" fill="#fff"/><circle cx="12" cy="10" r="2.5" fill="#333"/><circle cx="18" cy="12" r="1.2" fill="#333"/></svg>
  <div class="abs" style="left:222px;top:55px;font:7px/9px 'Liberation Sans',sans-serif;color:#e8f4ff">Zoho</div>
  <div class="abs" style="left:313px;top:37px;width:16px;height:31px;border-radius:2px;background:#17365e"></div>
  <div class="abs" style="left:315px;top:40px;width:12px;height:24px;background:#2a6ab0"></div>
  <div class="abs" style="left:303px;top:48px;width:20px;height:3px;background:#e8f0f8"></div>
  <div class="abs" style="left:312px;top:56px;width:22px;height:3px;background:#e8c850"></div>
  <div class="abs" style="left:330px;top:42px;width:5px;height:5px;border-radius:50%;background:#f08050"></div>
  <div class="abs" style="left:300px;top:57px;width:6px;height:6px;border-radius:50%;background:#e8e8f0"></div>
  <div class="abs" style="left:328px;top:62px;width:5px;height:6px;background:#f0c040"></div>
  <div class="abs" style="left:296px;top:44px;width:4px;height:4px;background:#15304e"></div>
  <div class="abs" style="left:310px;top:28px;width:24px;height:1px;background:#e0d060"></div>
  <div class="abs" style="left:286px;top:70px;font:7px/9px 'Liberation Sans',sans-serif;color:#e8f4ff">Numérique</div>
  <div class="abs" style="left:33px;top:101px;font:4.6px/6px 'Liberation Sans',sans-serif;color:#444"><span style="display:inline-block;width:0;height:0;border-left:2.5px solid transparent;border-right:2.5px solid transparent;border-bottom:4px solid #e8b020;vertical-align:-0.5px"></span> Bonjour, nous vous souhaitons la bienvenue sur notre site ! <span style="display:inline-block;width:4px;height:4px;border-radius:1px;background:#f0c030;vertical-align:-0.5px"></span></div>
  <svg class="abs" style="left:72px;top:119px" width="25" height="21" viewBox="0 0 25 21"><rect x="0" y="0" width="25" height="6" rx="1" fill="#555"/><rect x="0" y="7.5" width="25" height="6" rx="1" fill="#555"/><rect x="0" y="15" width="25" height="6" rx="1" fill="#555"/><rect x="19" y="2" width="2" height="2" fill="#ddd"/><rect x="19" y="9.5" width="2" height="2" fill="#ddd"/><rect x="19" y="17" width="2" height="2" fill="#ddd"/></svg>
  <svg class="abs" style="left:174px;top:119px" width="31" height="20" viewBox="0 0 31 20"><path d="M5,20 Q0,20 0,15 Q0,10 6,10 Q6,2 14,1 Q22,0 24,8 Q31,8 31,14 Q31,20 25,20Z" fill="#555"/></svg>
  <svg class="abs" style="left:278px;top:119px" width="31" height="21" viewBox="0 0 31 21"><path d="M2,2 L12,9 L2,16" stroke="#555" stroke-width="3.2" fill="none"/><rect x="15" y="16" width="16" height="3.5" fill="#555"/></svg>
  <div class="abs" style="left:67px;top:142px;font:5px/6px 'Liberation Sans',sans-serif;color:#555">On Premise</div>
  <div class="abs" style="left:179px;top:142px;font:5px/6px 'Liberation Sans',sans-serif;color:#555">Cloud</div>
  <div class="abs" style="left:276px;top:142px;font:5px/6px 'Liberation Sans',sans-serif;color:#555">Scripting</div>
  <div class="abs" style="left:121px;top:162px;width:25px;height:18px;border-radius:5px;background:#e03c2c"></div>
  <div class="abs" style="left:131px;top:166px;width:0;height:0;border-top:5px solid transparent;border-bottom:5px solid transparent;border-left:8px solid #fff"></div>
  <svg class="abs" style="left:149px;top:159px" width="23" height="23" viewBox="0 0 23 23"><circle cx="11.5" cy="11.5" r="11.5" fill="#3a5a98"/><path d="M13,23 V13.5 H16 L16.5,10 H13 V8 Q13,6.5 14.5,6.5 H16.6 V3.5 Q15,3.3 13.8,3.3 Q9.5,3.3 9.5,7.5 V10 H6.5 V13.5 H9.5 V23Z" fill="#fff"/></svg>
  <svg class="abs" style="left:175px;top:161px" width="24" height="20" viewBox="0 0 24 20"><path d="M24,2.4 Q22.6,3 21.2,3.2 Q22.7,2.3 23.3,0.6 Q21.9,1.4 20.3,1.8 Q18.9,0.3 16.8,0.3 Q12,0.3 12,5.7 Q6,5.5 1.7,0.8 Q-0.2,5 3.4,7.5 Q2.4,7.5 1.4,7 Q1.5,11 5.4,12 Q4.3,12.3 3.2,12.1 Q4.3,15.4 7.8,15.6 Q4.2,18.3 0,17.9 Q3.5,20 7.6,20 Q21.5,20 21.5,5.7 V5.1 Q23,4 24,2.4Z" fill="#1da1f2"/></svg>
  <div class="abs" style="left:204px;top:161px;width:20px;height:20px;background:#0e76b5"></div>
  <div class="abs" style="left:206px;top:165px;font:bold 12px/14px 'Liberation Sans',sans-serif;color:#fff;letter-spacing:-0.5px">in</div>
  <svg class="abs" style="left:230px;top:159px" width="23" height="23" viewBox="0 0 16 16"><path fill="#666" d="M8 0C3.58 0 0 3.58 0 8c0 3.54 2.29 6.53 5.47 7.59.4.07.55-.17.55-.38 0-.19-.01-.82-.01-1.49-2.01.37-2.53-.49-2.69-.94-.09-.23-.48-.94-.82-1.13-.28-.15-.68-.52-.01-.53.63-.01 1.08.58 1.23.82.72 1.21 1.87.87 2.33.66.07-.52.28-.87.51-1.07-1.78-.2-3.64-.89-3.640-3.950 0-.87.31-1.59.82-2.15-.08-.2-.36-1.02.08-2.12 0 0 .67-.21 2.200.820.64-.18 1.32-.27 2-.27.68 0 1.36.09 2 .27 1.53-1.04 2.2-.82 2.2-.82.44 1.1.16 1.92.08 2.12.51.56.82 1.27.82 2.15 0 3.07-1.87 3.75-3.65 3.95.29.25.54.73.54 1.48 0 1.07-.01 1.93-.01 2.2 0 .21.15.46.55.38A8.013 8.013 0 0016 8c0-4.42-3.58-8-8-8z"/></svg>
  <div class="abs" style="left:35px;top:197px;width:91px;height:24px;background:linear-gradient(180deg,#2a5cc8 0%,#3a78d8 50%,#6aa8ec 100%)"></div>
  <div class="abs" style="left:45px;top:207px;width:62px;height:2px;background:#102a50"></div>
  <div class="abs" style="left:70px;top:213px;width:14px;height:3px;background:#1a60c0"></div>
  <div class="abs" style="left:131px;top:197.5px;font:6.2px/7px 'Liberation Sans',sans-serif;color:#333;-webkit-text-stroke:0.2px #333;white-space:nowrap">Présentation du nouveau Microsoft Edge</div>
  <div class="abs" style="left:131px;top:208px;width:62px;height:1px;background:#ccc"></div>
  <div class="abs" style="left:131px;top:219px;width:150px;height:1px;background:#ddd"></div>
  <div class="abs" style="left:2px;top:3px;font:4.2px/5px 'Liberation Sans',sans-serif;color:#777">Experts du Numériq... ×</div>
  <div class="abs" style="left:2px;top:13px;font:5px/5px 'Liberation Sans',sans-serif;color:#333">&lt;</div>
  <div class="abs" style="left:8px;top:13px;font:5px/5px 'Liberation Sans',sans-serif;color:#ccc">&gt;</div><div class="abs" style="left:16px;top:13px;font:5px/5px 'Liberation Sans',sans-serif;color:#444">c</div>
  <div class="abs" style="left:26px;top:13px;width:20px;height:3px;background:repeating-linear-gradient(90deg,#777 0 2px,transparent 2px 5px)"></div>
  <div class="abs" style="left:375px;top:30px;width:3px;height:70px;background:#c8c8c8"></div>
</div>
</body></html>
